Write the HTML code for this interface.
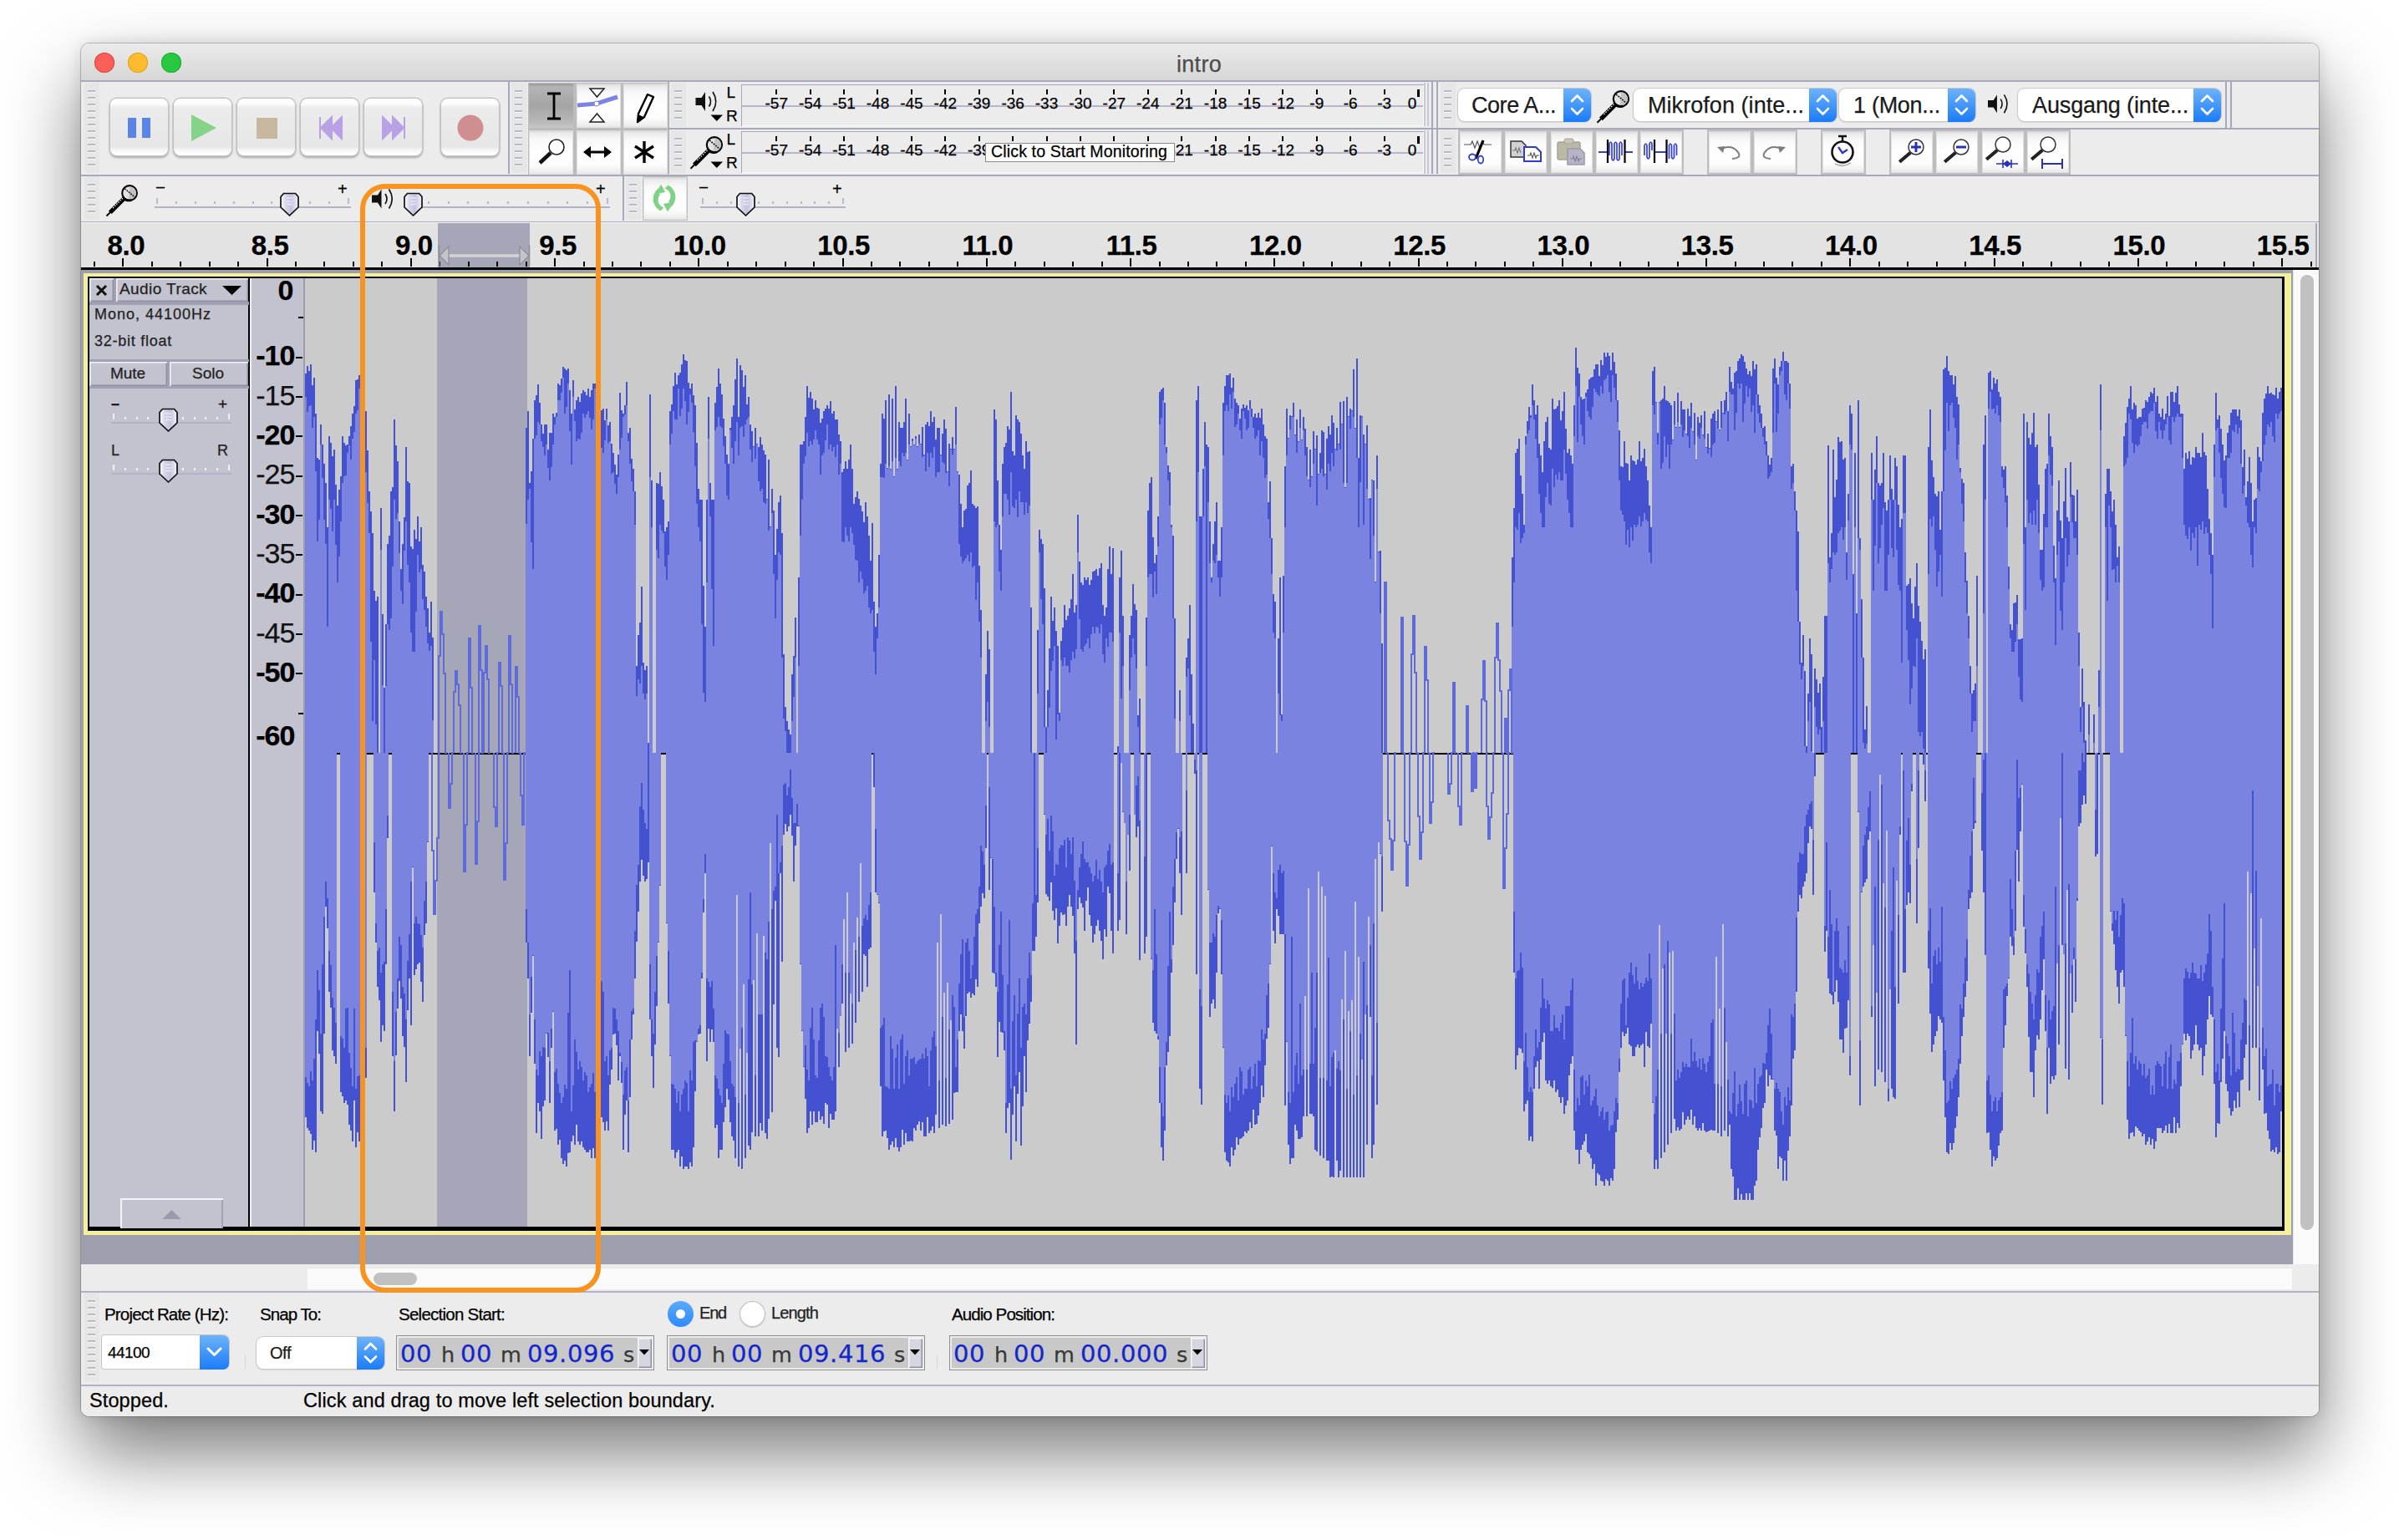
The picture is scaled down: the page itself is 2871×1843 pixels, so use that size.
<!DOCTYPE html>
<html><head><meta charset="utf-8"><title>intro</title>
<style>
html,body{margin:0;padding:0;background:#fff;}
body{width:2871px;height:1843px;overflow:hidden;position:relative;font-family:"Liberation Sans",sans-serif;}
#shadow{position:absolute;left:97px;top:52px;width:2678px;height:1643px;border-radius:10px;box-shadow:0 0 0 1px rgba(0,0,0,.2),0 44px 90px 0 rgba(0,0,0,.52),0 0 18px rgba(0,0,0,.12);}
#win{position:absolute;left:97px;top:52px;width:2678px;height:1643px;border-radius:10px;overflow:hidden;background:#ececec;}
#win div{position:absolute;}
.t{position:absolute;white-space:pre;-webkit-text-stroke:0.25px currentColor;}
#ov{position:absolute;left:0;top:0;}
#hl{position:absolute;left:334px;top:168px;width:276px;height:1315px;border:6px solid #f7931e;border-radius:30px;}
</style></head><body>
<div id="shadow"></div>
<div id="win">
<div style="left:0px;top:0px;width:2678px;height:45px;background:linear-gradient(#ebebeb,#d6d6d6);border-bottom:1px solid #b4b4b4;"></div>
<div style="left:16px;top:11px;width:24px;height:24px;border-radius:50%;background:#fc5f57;box-shadow:inset 0 0 0 1px #e0443e;"></div>
<div style="left:56px;top:11px;width:24px;height:24px;border-radius:50%;background:#fdbc2e;box-shadow:inset 0 0 0 1px #dea123;"></div>
<div style="left:96px;top:11px;width:24px;height:24px;border-radius:50%;background:#28c840;box-shadow:inset 0 0 0 1px #1dad2b;"></div>
<span class="t" style="left:1311.00px;top:11.64px;font:400 27px/1 'Liberation Sans',sans-serif;color:#4c4c4c;letter-spacing:0.295px;">intro</span>
<div style="left:0px;top:45px;width:2678px;height:170px;background:#ececec;"></div>
<div style="left:0px;top:44px;width:2678px;height:2px;background:#a9a9b9;"></div>
<div style="left:0px;top:157px;width:2678px;height:2px;background:#a8a8bc;"></div>
<div style="left:0px;top:213px;width:2678px;height:2px;background:#a8a8bc;"></div>
<div style="left:703px;top:101px;width:1975px;height:2px;background:#a8a8bc;"></div>
<div style="left:4px;top:47px;width:18px;height:108px;background:#e6e6e6;"></div>
<div style="left:8px;top:56px;width:9px;height:2px;background:#b9b9c9;"></div>
<div style="left:8px;top:58px;width:9px;height:1px;background:#fafafa;"></div>
<div style="left:8px;top:64px;width:9px;height:2px;background:#b9b9c9;"></div>
<div style="left:8px;top:66px;width:9px;height:1px;background:#fafafa;"></div>
<div style="left:8px;top:72px;width:9px;height:2px;background:#b9b9c9;"></div>
<div style="left:8px;top:74px;width:9px;height:1px;background:#fafafa;"></div>
<div style="left:8px;top:80px;width:9px;height:2px;background:#b9b9c9;"></div>
<div style="left:8px;top:82px;width:9px;height:1px;background:#fafafa;"></div>
<div style="left:8px;top:88px;width:9px;height:2px;background:#b9b9c9;"></div>
<div style="left:8px;top:90px;width:9px;height:1px;background:#fafafa;"></div>
<div style="left:8px;top:96px;width:9px;height:2px;background:#b9b9c9;"></div>
<div style="left:8px;top:98px;width:9px;height:1px;background:#fafafa;"></div>
<div style="left:8px;top:104px;width:9px;height:2px;background:#b9b9c9;"></div>
<div style="left:8px;top:106px;width:9px;height:1px;background:#fafafa;"></div>
<div style="left:8px;top:112px;width:9px;height:2px;background:#b9b9c9;"></div>
<div style="left:8px;top:114px;width:9px;height:1px;background:#fafafa;"></div>
<div style="left:8px;top:120px;width:9px;height:2px;background:#b9b9c9;"></div>
<div style="left:8px;top:122px;width:9px;height:1px;background:#fafafa;"></div>
<div style="left:8px;top:128px;width:9px;height:2px;background:#b9b9c9;"></div>
<div style="left:8px;top:130px;width:9px;height:1px;background:#fafafa;"></div>
<div style="left:8px;top:136px;width:9px;height:2px;background:#b9b9c9;"></div>
<div style="left:8px;top:138px;width:9px;height:1px;background:#fafafa;"></div>
<div style="left:8px;top:144px;width:9px;height:2px;background:#b9b9c9;"></div>
<div style="left:8px;top:146px;width:9px;height:1px;background:#fafafa;"></div>
<div style="left:4px;top:159px;width:18px;height:52px;background:#e6e6e6;"></div>
<div style="left:8px;top:168px;width:9px;height:2px;background:#b9b9c9;"></div>
<div style="left:8px;top:170px;width:9px;height:1px;background:#fafafa;"></div>
<div style="left:8px;top:176px;width:9px;height:2px;background:#b9b9c9;"></div>
<div style="left:8px;top:178px;width:9px;height:1px;background:#fafafa;"></div>
<div style="left:8px;top:184px;width:9px;height:2px;background:#b9b9c9;"></div>
<div style="left:8px;top:186px;width:9px;height:1px;background:#fafafa;"></div>
<div style="left:8px;top:192px;width:9px;height:2px;background:#b9b9c9;"></div>
<div style="left:8px;top:194px;width:9px;height:1px;background:#fafafa;"></div>
<div style="left:8px;top:200px;width:9px;height:2px;background:#b9b9c9;"></div>
<div style="left:8px;top:202px;width:9px;height:1px;background:#fafafa;"></div>
<div style="left:511px;top:46px;width:2px;height:110px;background:#a8a8bc;"></div>
<div style="left:515px;top:47px;width:18px;height:108px;background:#e6e6e6;"></div>
<div style="left:519px;top:56px;width:9px;height:2px;background:#b9b9c9;"></div>
<div style="left:519px;top:58px;width:9px;height:1px;background:#fafafa;"></div>
<div style="left:519px;top:64px;width:9px;height:2px;background:#b9b9c9;"></div>
<div style="left:519px;top:66px;width:9px;height:1px;background:#fafafa;"></div>
<div style="left:519px;top:72px;width:9px;height:2px;background:#b9b9c9;"></div>
<div style="left:519px;top:74px;width:9px;height:1px;background:#fafafa;"></div>
<div style="left:519px;top:80px;width:9px;height:2px;background:#b9b9c9;"></div>
<div style="left:519px;top:82px;width:9px;height:1px;background:#fafafa;"></div>
<div style="left:519px;top:88px;width:9px;height:2px;background:#b9b9c9;"></div>
<div style="left:519px;top:90px;width:9px;height:1px;background:#fafafa;"></div>
<div style="left:519px;top:96px;width:9px;height:2px;background:#b9b9c9;"></div>
<div style="left:519px;top:98px;width:9px;height:1px;background:#fafafa;"></div>
<div style="left:519px;top:104px;width:9px;height:2px;background:#b9b9c9;"></div>
<div style="left:519px;top:106px;width:9px;height:1px;background:#fafafa;"></div>
<div style="left:519px;top:112px;width:9px;height:2px;background:#b9b9c9;"></div>
<div style="left:519px;top:114px;width:9px;height:1px;background:#fafafa;"></div>
<div style="left:519px;top:120px;width:9px;height:2px;background:#b9b9c9;"></div>
<div style="left:519px;top:122px;width:9px;height:1px;background:#fafafa;"></div>
<div style="left:519px;top:128px;width:9px;height:2px;background:#b9b9c9;"></div>
<div style="left:519px;top:130px;width:9px;height:1px;background:#fafafa;"></div>
<div style="left:519px;top:136px;width:9px;height:2px;background:#b9b9c9;"></div>
<div style="left:519px;top:138px;width:9px;height:1px;background:#fafafa;"></div>
<div style="left:519px;top:144px;width:9px;height:2px;background:#b9b9c9;"></div>
<div style="left:519px;top:146px;width:9px;height:1px;background:#fafafa;"></div>
<div style="left:702px;top:46px;width:2px;height:110px;background:#a8a8bc;"></div>
<div style="left:706px;top:47px;width:18px;height:53px;background:#e6e6e6;"></div>
<div style="left:710px;top:56px;width:9px;height:2px;background:#b9b9c9;"></div>
<div style="left:710px;top:58px;width:9px;height:1px;background:#fafafa;"></div>
<div style="left:710px;top:64px;width:9px;height:2px;background:#b9b9c9;"></div>
<div style="left:710px;top:66px;width:9px;height:1px;background:#fafafa;"></div>
<div style="left:710px;top:72px;width:9px;height:2px;background:#b9b9c9;"></div>
<div style="left:710px;top:74px;width:9px;height:1px;background:#fafafa;"></div>
<div style="left:710px;top:80px;width:9px;height:2px;background:#b9b9c9;"></div>
<div style="left:710px;top:82px;width:9px;height:1px;background:#fafafa;"></div>
<div style="left:710px;top:88px;width:9px;height:2px;background:#b9b9c9;"></div>
<div style="left:710px;top:90px;width:9px;height:1px;background:#fafafa;"></div>
<div style="left:706px;top:104px;width:18px;height:51px;background:#e6e6e6;"></div>
<div style="left:710px;top:113px;width:9px;height:2px;background:#b9b9c9;"></div>
<div style="left:710px;top:115px;width:9px;height:1px;background:#fafafa;"></div>
<div style="left:710px;top:121px;width:9px;height:2px;background:#b9b9c9;"></div>
<div style="left:710px;top:123px;width:9px;height:1px;background:#fafafa;"></div>
<div style="left:710px;top:129px;width:9px;height:2px;background:#b9b9c9;"></div>
<div style="left:710px;top:131px;width:9px;height:1px;background:#fafafa;"></div>
<div style="left:710px;top:137px;width:9px;height:2px;background:#b9b9c9;"></div>
<div style="left:710px;top:139px;width:9px;height:1px;background:#fafafa;"></div>
<div style="left:710px;top:145px;width:9px;height:2px;background:#b9b9c9;"></div>
<div style="left:710px;top:147px;width:9px;height:1px;background:#fafafa;"></div>
<div style="left:1616px;top:46px;width:2px;height:110px;background:#a8a8bc;"></div>
<div style="left:1622px;top:46px;width:2px;height:110px;background:#a8a8bc;"></div>
<div style="left:1627px;top:47px;width:18px;height:53px;background:#e6e6e6;"></div>
<div style="left:1631px;top:56px;width:9px;height:2px;background:#b9b9c9;"></div>
<div style="left:1631px;top:58px;width:9px;height:1px;background:#fafafa;"></div>
<div style="left:1631px;top:64px;width:9px;height:2px;background:#b9b9c9;"></div>
<div style="left:1631px;top:66px;width:9px;height:1px;background:#fafafa;"></div>
<div style="left:1631px;top:72px;width:9px;height:2px;background:#b9b9c9;"></div>
<div style="left:1631px;top:74px;width:9px;height:1px;background:#fafafa;"></div>
<div style="left:1631px;top:80px;width:9px;height:2px;background:#b9b9c9;"></div>
<div style="left:1631px;top:82px;width:9px;height:1px;background:#fafafa;"></div>
<div style="left:1631px;top:88px;width:9px;height:2px;background:#b9b9c9;"></div>
<div style="left:1631px;top:90px;width:9px;height:1px;background:#fafafa;"></div>
<div style="left:1627px;top:104px;width:18px;height:51px;background:#e6e6e6;"></div>
<div style="left:1631px;top:113px;width:9px;height:2px;background:#b9b9c9;"></div>
<div style="left:1631px;top:115px;width:9px;height:1px;background:#fafafa;"></div>
<div style="left:1631px;top:121px;width:9px;height:2px;background:#b9b9c9;"></div>
<div style="left:1631px;top:123px;width:9px;height:1px;background:#fafafa;"></div>
<div style="left:1631px;top:129px;width:9px;height:2px;background:#b9b9c9;"></div>
<div style="left:1631px;top:131px;width:9px;height:1px;background:#fafafa;"></div>
<div style="left:1631px;top:137px;width:9px;height:2px;background:#b9b9c9;"></div>
<div style="left:1631px;top:139px;width:9px;height:1px;background:#fafafa;"></div>
<div style="left:1631px;top:145px;width:9px;height:2px;background:#b9b9c9;"></div>
<div style="left:1631px;top:147px;width:9px;height:1px;background:#fafafa;"></div>
<div style="left:2566px;top:46px;width:2px;height:55px;background:#a8a8bc;"></div>
<div style="left:2572px;top:46px;width:2px;height:55px;background:#a8a8bc;"></div>
<div style="left:648px;top:158px;width:2px;height:54px;background:#a8a8bc;"></div>
<div style="left:652px;top:159px;width:18px;height:52px;background:#e6e6e6;"></div>
<div style="left:656px;top:168px;width:9px;height:2px;background:#b9b9c9;"></div>
<div style="left:656px;top:170px;width:9px;height:1px;background:#fafafa;"></div>
<div style="left:656px;top:176px;width:9px;height:2px;background:#b9b9c9;"></div>
<div style="left:656px;top:178px;width:9px;height:1px;background:#fafafa;"></div>
<div style="left:656px;top:184px;width:9px;height:2px;background:#b9b9c9;"></div>
<div style="left:656px;top:186px;width:9px;height:1px;background:#fafafa;"></div>
<div style="left:656px;top:192px;width:9px;height:2px;background:#b9b9c9;"></div>
<div style="left:656px;top:194px;width:9px;height:1px;background:#fafafa;"></div>
<div style="left:656px;top:200px;width:9px;height:2px;background:#b9b9c9;"></div>
<div style="left:656px;top:202px;width:9px;height:1px;background:#fafafa;"></div>
<div style="left:1607px;top:47px;width:2px;height:52px;background:#c9c9d6;"></div>
<div style="left:1611px;top:47px;width:2px;height:52px;background:#c9c9d6;"></div>
<div style="left:1607px;top:104px;width:2px;height:52px;background:#c9c9d6;"></div>
<div style="left:1611px;top:104px;width:2px;height:52px;background:#c9c9d6;"></div>
<div style="left:35px;top:66px;width:69px;height:68px;border-radius:8px;background:linear-gradient(#ffffff 0%,#fbfbfb 10%,#ececec 16%,#e9e9e9 55%,#e6e6e6 84%,#f8f8f8 92%,#ffffff 100%);box-shadow:0 0 0 1.5px #c2c2c2, 0 2px 2.5px 1px rgba(0,0,0,.30);"></div>
<div style="left:111px;top:66px;width:69px;height:68px;border-radius:8px;background:linear-gradient(#ffffff 0%,#fbfbfb 10%,#ececec 16%,#e9e9e9 55%,#e6e6e6 84%,#f8f8f8 92%,#ffffff 100%);box-shadow:0 0 0 1.5px #c2c2c2, 0 2px 2.5px 1px rgba(0,0,0,.30);"></div>
<div style="left:187px;top:66px;width:69px;height:68px;border-radius:8px;background:linear-gradient(#ffffff 0%,#fbfbfb 10%,#ececec 16%,#e9e9e9 55%,#e6e6e6 84%,#f8f8f8 92%,#ffffff 100%);box-shadow:0 0 0 1.5px #c2c2c2, 0 2px 2.5px 1px rgba(0,0,0,.30);"></div>
<div style="left:263px;top:66px;width:69px;height:68px;border-radius:8px;background:linear-gradient(#ffffff 0%,#fbfbfb 10%,#ececec 16%,#e9e9e9 55%,#e6e6e6 84%,#f8f8f8 92%,#ffffff 100%);box-shadow:0 0 0 1.5px #c2c2c2, 0 2px 2.5px 1px rgba(0,0,0,.30);"></div>
<div style="left:339px;top:66px;width:69px;height:68px;border-radius:8px;background:linear-gradient(#ffffff 0%,#fbfbfb 10%,#ececec 16%,#e9e9e9 55%,#e6e6e6 84%,#f8f8f8 92%,#ffffff 100%);box-shadow:0 0 0 1.5px #c2c2c2, 0 2px 2.5px 1px rgba(0,0,0,.30);"></div>
<div style="left:431px;top:66px;width:69px;height:68px;border-radius:8px;background:linear-gradient(#ffffff 0%,#fbfbfb 10%,#ececec 16%,#e9e9e9 55%,#e6e6e6 84%,#f8f8f8 92%,#ffffff 100%);box-shadow:0 0 0 1.5px #c2c2c2, 0 2px 2.5px 1px rgba(0,0,0,.30);"></div>
<div style="left:535px;top:46.5px;width:167.5px;height:110.5px;background:#bcbcbc;"></div>
<div style="left:536px;top:47.5px;width:53px;height:53px;background:linear-gradient(#9a9a9a 0%,#b4b4b4 8%,#a4a4a4 50%,#b9b9b9 88%,#c8c8c8 100%);"></div>
<div style="left:536px;top:103.5px;width:53px;height:53px;background:linear-gradient(#d4d4d4 0%,#ececec 7%,#f9f9f9 22%,#ffffff 50%,#fbfbfb 80%,#ededed 95%,#dedede 100%);box-shadow:inset 1px 0 0 #e0e0e0,inset -1px 0 0 #e0e0e0;"></div>
<div style="left:592.5px;top:47.5px;width:53px;height:53px;background:linear-gradient(#d4d4d4 0%,#ececec 7%,#f9f9f9 22%,#ffffff 50%,#fbfbfb 80%,#ededed 95%,#dedede 100%);box-shadow:inset 1px 0 0 #e0e0e0,inset -1px 0 0 #e0e0e0;"></div>
<div style="left:592.5px;top:103.5px;width:53px;height:53px;background:linear-gradient(#d4d4d4 0%,#ececec 7%,#f9f9f9 22%,#ffffff 50%,#fbfbfb 80%,#ededed 95%,#dedede 100%);box-shadow:inset 1px 0 0 #e0e0e0,inset -1px 0 0 #e0e0e0;"></div>
<div style="left:648.5px;top:47.5px;width:53px;height:53px;background:linear-gradient(#d4d4d4 0%,#ececec 7%,#f9f9f9 22%,#ffffff 50%,#fbfbfb 80%,#ededed 95%,#dedede 100%);box-shadow:inset 1px 0 0 #e0e0e0,inset -1px 0 0 #e0e0e0;"></div>
<div style="left:648.5px;top:103.5px;width:53px;height:53px;background:linear-gradient(#d4d4d4 0%,#ececec 7%,#f9f9f9 22%,#ffffff 50%,#fbfbfb 80%,#ededed 95%,#dedede 100%);box-shadow:inset 1px 0 0 #e0e0e0,inset -1px 0 0 #e0e0e0;"></div>
<div style="left:790px;top:49px;width:817px;height:50px;background:#ececec;box-shadow:inset 1px 1px 0 #a8a8bc, inset -1px -1px 0 #fbfbfb;"></div>
<div style="left:791px;top:74px;width:815px;height:2px;background:#b6b6c8;"></div>
<div style="left:831.25px;top:55px;width:2px;height:6px;background:#000;"></div>
<span class="t" style="left:818.52px;top:62.42px;font:400 19px/1 'Liberation Sans',sans-serif;color:#000;">-57</span>
<div style="left:871.66px;top:55px;width:2px;height:6px;background:#000;"></div>
<span class="t" style="left:858.93px;top:62.42px;font:400 19px/1 'Liberation Sans',sans-serif;color:#000;">-54</span>
<div style="left:912.07px;top:55px;width:2px;height:6px;background:#000;"></div>
<span class="t" style="left:899.34px;top:62.42px;font:400 19px/1 'Liberation Sans',sans-serif;color:#000;">-51</span>
<div style="left:952.48px;top:55px;width:2px;height:6px;background:#000;"></div>
<span class="t" style="left:939.75px;top:62.42px;font:400 19px/1 'Liberation Sans',sans-serif;color:#000;">-48</span>
<div style="left:992.89px;top:55px;width:2px;height:6px;background:#000;"></div>
<span class="t" style="left:980.16px;top:62.42px;font:400 19px/1 'Liberation Sans',sans-serif;color:#000;">-45</span>
<div style="left:1033.3px;top:55px;width:2px;height:6px;background:#000;"></div>
<span class="t" style="left:1020.57px;top:62.42px;font:400 19px/1 'Liberation Sans',sans-serif;color:#000;">-42</span>
<div style="left:1073.71px;top:55px;width:2px;height:6px;background:#000;"></div>
<span class="t" style="left:1060.98px;top:62.42px;font:400 19px/1 'Liberation Sans',sans-serif;color:#000;">-39</span>
<div style="left:1114.12px;top:55px;width:2px;height:6px;background:#000;"></div>
<span class="t" style="left:1101.39px;top:62.42px;font:400 19px/1 'Liberation Sans',sans-serif;color:#000;">-36</span>
<div style="left:1154.53px;top:55px;width:2px;height:6px;background:#000;"></div>
<span class="t" style="left:1141.80px;top:62.42px;font:400 19px/1 'Liberation Sans',sans-serif;color:#000;">-33</span>
<div style="left:1194.94px;top:55px;width:2px;height:6px;background:#000;"></div>
<span class="t" style="left:1182.21px;top:62.42px;font:400 19px/1 'Liberation Sans',sans-serif;color:#000;">-30</span>
<div style="left:1235.35px;top:55px;width:2px;height:6px;background:#000;"></div>
<span class="t" style="left:1222.62px;top:62.42px;font:400 19px/1 'Liberation Sans',sans-serif;color:#000;">-27</span>
<div style="left:1275.76px;top:55px;width:2px;height:6px;background:#000;"></div>
<span class="t" style="left:1263.03px;top:62.42px;font:400 19px/1 'Liberation Sans',sans-serif;color:#000;">-24</span>
<div style="left:1316.17px;top:55px;width:2px;height:6px;background:#000;"></div>
<span class="t" style="left:1303.44px;top:62.42px;font:400 19px/1 'Liberation Sans',sans-serif;color:#000;">-21</span>
<div style="left:1356.58px;top:55px;width:2px;height:6px;background:#000;"></div>
<span class="t" style="left:1343.85px;top:62.42px;font:400 19px/1 'Liberation Sans',sans-serif;color:#000;">-18</span>
<div style="left:1396.99px;top:55px;width:2px;height:6px;background:#000;"></div>
<span class="t" style="left:1384.26px;top:62.42px;font:400 19px/1 'Liberation Sans',sans-serif;color:#000;">-15</span>
<div style="left:1437.4px;top:55px;width:2px;height:6px;background:#000;"></div>
<span class="t" style="left:1424.67px;top:62.42px;font:400 19px/1 'Liberation Sans',sans-serif;color:#000;">-12</span>
<div style="left:1477.81px;top:55px;width:2px;height:6px;background:#000;"></div>
<span class="t" style="left:1470.36px;top:62.42px;font:400 19px/1 'Liberation Sans',sans-serif;color:#000;">-9</span>
<div style="left:1518.22px;top:55px;width:2px;height:6px;background:#000;"></div>
<span class="t" style="left:1510.77px;top:62.42px;font:400 19px/1 'Liberation Sans',sans-serif;color:#000;">-6</span>
<div style="left:1558.63px;top:55px;width:2px;height:6px;background:#000;"></div>
<span class="t" style="left:1551.18px;top:62.42px;font:400 19px/1 'Liberation Sans',sans-serif;color:#000;">-3</span>
<div style="left:1598.54px;top:55px;width:3px;height:9px;background:#000;"></div>
<span class="t" style="left:1587.76px;top:62.42px;font:400 19px/1 'Liberation Sans',sans-serif;color:#000;">0</span>
<span class="t" style="left:772.50px;top:48.92px;font:400 19px/1 'Liberation Sans',sans-serif;color:#000;">L</span>
<span class="t" style="left:772.00px;top:76.92px;font:400 19px/1 'Liberation Sans',sans-serif;color:#000;">R</span>
<div style="left:790px;top:105px;width:817px;height:50px;background:#ececec;box-shadow:inset 1px 1px 0 #a8a8bc, inset -1px -1px 0 #fbfbfb;"></div>
<div style="left:791px;top:130px;width:815px;height:2px;background:#b6b6c8;"></div>
<div style="left:831.25px;top:111px;width:2px;height:6px;background:#000;"></div>
<span class="t" style="left:818.52px;top:118.42px;font:400 19px/1 'Liberation Sans',sans-serif;color:#000;">-57</span>
<div style="left:871.66px;top:111px;width:2px;height:6px;background:#000;"></div>
<span class="t" style="left:858.93px;top:118.42px;font:400 19px/1 'Liberation Sans',sans-serif;color:#000;">-54</span>
<div style="left:912.07px;top:111px;width:2px;height:6px;background:#000;"></div>
<span class="t" style="left:899.34px;top:118.42px;font:400 19px/1 'Liberation Sans',sans-serif;color:#000;">-51</span>
<div style="left:952.48px;top:111px;width:2px;height:6px;background:#000;"></div>
<span class="t" style="left:939.75px;top:118.42px;font:400 19px/1 'Liberation Sans',sans-serif;color:#000;">-48</span>
<div style="left:992.89px;top:111px;width:2px;height:6px;background:#000;"></div>
<span class="t" style="left:980.16px;top:118.42px;font:400 19px/1 'Liberation Sans',sans-serif;color:#000;">-45</span>
<div style="left:1033.3px;top:111px;width:2px;height:6px;background:#000;"></div>
<span class="t" style="left:1020.57px;top:118.42px;font:400 19px/1 'Liberation Sans',sans-serif;color:#000;">-42</span>
<div style="left:1073.71px;top:111px;width:2px;height:6px;background:#000;"></div>
<span class="t" style="left:1060.98px;top:118.42px;font:400 19px/1 'Liberation Sans',sans-serif;color:#000;">-39</span>
<div style="left:1114.12px;top:111px;width:2px;height:6px;background:#000;"></div>
<span class="t" style="left:1101.39px;top:118.42px;font:400 19px/1 'Liberation Sans',sans-serif;color:#000;">-36</span>
<div style="left:1154.53px;top:111px;width:2px;height:6px;background:#000;"></div>
<span class="t" style="left:1141.80px;top:118.42px;font:400 19px/1 'Liberation Sans',sans-serif;color:#000;">-33</span>
<div style="left:1194.94px;top:111px;width:2px;height:6px;background:#000;"></div>
<span class="t" style="left:1182.21px;top:118.42px;font:400 19px/1 'Liberation Sans',sans-serif;color:#000;">-30</span>
<div style="left:1235.35px;top:111px;width:2px;height:6px;background:#000;"></div>
<span class="t" style="left:1222.62px;top:118.42px;font:400 19px/1 'Liberation Sans',sans-serif;color:#000;">-27</span>
<div style="left:1275.76px;top:111px;width:2px;height:6px;background:#000;"></div>
<span class="t" style="left:1263.03px;top:118.42px;font:400 19px/1 'Liberation Sans',sans-serif;color:#000;">-24</span>
<div style="left:1316.17px;top:111px;width:2px;height:6px;background:#000;"></div>
<span class="t" style="left:1303.44px;top:118.42px;font:400 19px/1 'Liberation Sans',sans-serif;color:#000;">-21</span>
<div style="left:1356.58px;top:111px;width:2px;height:6px;background:#000;"></div>
<span class="t" style="left:1343.85px;top:118.42px;font:400 19px/1 'Liberation Sans',sans-serif;color:#000;">-18</span>
<div style="left:1396.99px;top:111px;width:2px;height:6px;background:#000;"></div>
<span class="t" style="left:1384.26px;top:118.42px;font:400 19px/1 'Liberation Sans',sans-serif;color:#000;">-15</span>
<div style="left:1437.4px;top:111px;width:2px;height:6px;background:#000;"></div>
<span class="t" style="left:1424.67px;top:118.42px;font:400 19px/1 'Liberation Sans',sans-serif;color:#000;">-12</span>
<div style="left:1477.81px;top:111px;width:2px;height:6px;background:#000;"></div>
<span class="t" style="left:1470.36px;top:118.42px;font:400 19px/1 'Liberation Sans',sans-serif;color:#000;">-9</span>
<div style="left:1518.22px;top:111px;width:2px;height:6px;background:#000;"></div>
<span class="t" style="left:1510.77px;top:118.42px;font:400 19px/1 'Liberation Sans',sans-serif;color:#000;">-6</span>
<div style="left:1558.63px;top:111px;width:2px;height:6px;background:#000;"></div>
<span class="t" style="left:1551.18px;top:118.42px;font:400 19px/1 'Liberation Sans',sans-serif;color:#000;">-3</span>
<div style="left:1598.54px;top:111px;width:3px;height:9px;background:#000;"></div>
<span class="t" style="left:1587.76px;top:118.42px;font:400 19px/1 'Liberation Sans',sans-serif;color:#000;">0</span>
<span class="t" style="left:772.50px;top:104.92px;font:400 19px/1 'Liberation Sans',sans-serif;color:#000;">L</span>
<span class="t" style="left:772.00px;top:132.92px;font:400 19px/1 'Liberation Sans',sans-serif;color:#000;">R</span>
<div style="left:1082px;top:119px;width:227px;height:23px;background:#fff;border:1.5px solid #8a8a8a;box-sizing:border-box;"></div>
<span class="t" style="left:1089.00px;top:120.49px;font:400 19.5px/1 'Liberation Sans',sans-serif;color:#000;letter-spacing:0.160px;">Click to Start Monitoring</span>
<div style="left:1648px;top:54px;width:159px;height:39px;border-radius:8px;background:#fff;box-shadow:0 0 0 1px #c9c9c9,0 1px 2px rgba(0,0,0,.25);"></div>
<div style="left:1774px;top:53.5px;width:33px;height:40px;border-radius:0 8px 8px 0;background:linear-gradient(#6db3fa,#1b7bf8);"></div>
<span class="t" style="left:1664.00px;top:61.14px;font:400 27px/1 'Liberation Sans',sans-serif;color:#1a1a1a;letter-spacing:-0.450px;">Core A...</span>
<div style="left:1858px;top:54px;width:243px;height:39px;border-radius:8px;background:#fff;box-shadow:0 0 0 1px #c9c9c9,0 1px 2px rgba(0,0,0,.25);"></div>
<div style="left:2068px;top:53.5px;width:33px;height:40px;border-radius:0 8px 8px 0;background:linear-gradient(#6db3fa,#1b7bf8);"></div>
<span class="t" style="left:1875.00px;top:61.14px;font:400 27px/1 'Liberation Sans',sans-serif;color:#1a1a1a;letter-spacing:0.055px;">Mikrofon (inte...</span>
<div style="left:2104px;top:54px;width:163px;height:39px;border-radius:8px;background:#fff;box-shadow:0 0 0 1px #c9c9c9,0 1px 2px rgba(0,0,0,.25);"></div>
<div style="left:2234px;top:53.5px;width:33px;height:40px;border-radius:0 8px 8px 0;background:linear-gradient(#6db3fa,#1b7bf8);"></div>
<span class="t" style="left:2121.00px;top:61.14px;font:400 27px/1 'Liberation Sans',sans-serif;color:#1a1a1a;letter-spacing:-0.282px;">1 (Mon...</span>
<div style="left:2318px;top:54px;width:243px;height:39px;border-radius:8px;background:#fff;box-shadow:0 0 0 1px #c9c9c9,0 1px 2px rgba(0,0,0,.25);"></div>
<div style="left:2528px;top:53.5px;width:33px;height:40px;border-radius:0 8px 8px 0;background:linear-gradient(#6db3fa,#1b7bf8);"></div>
<span class="t" style="left:2335.00px;top:61.14px;font:400 27px/1 'Liberation Sans',sans-serif;color:#1a1a1a;letter-spacing:-0.132px;">Ausgang (inte...</span>
<div style="left:1647.5px;top:103px;width:270px;height:53.5px;background:#bdbdbd;"></div>
<div style="left:1945.5px;top:103px;width:108.5px;height:53.5px;background:#bdbdbd;"></div>
<div style="left:2081.5px;top:103px;width:54px;height:53.5px;background:#bdbdbd;"></div>
<div style="left:2164px;top:103px;width:216.5px;height:53.5px;background:#bdbdbd;"></div>
<div style="left:1649.5px;top:104.5px;width:50px;height:50.5px;background:linear-gradient(#d4d4d4 0%,#ececec 7%,#f9f9f9 22%,#ffffff 50%,#fbfbfb 80%,#ededed 95%,#dedede 100%);box-shadow:inset 1px 0 0 #e0e0e0,inset -1px 0 0 #e0e0e0;"></div>
<div style="left:1704px;top:104.5px;width:50px;height:50.5px;background:linear-gradient(#d4d4d4 0%,#ececec 7%,#f9f9f9 22%,#ffffff 50%,#fbfbfb 80%,#ededed 95%,#dedede 100%);box-shadow:inset 1px 0 0 #e0e0e0,inset -1px 0 0 #e0e0e0;"></div>
<div style="left:1758.5px;top:104.5px;width:50px;height:50.5px;background:linear-gradient(#d4d4d4 0%,#ececec 7%,#f9f9f9 22%,#ffffff 50%,#fbfbfb 80%,#ededed 95%,#dedede 100%);box-shadow:inset 1px 0 0 #e0e0e0,inset -1px 0 0 #e0e0e0;"></div>
<div style="left:1812.5px;top:104.5px;width:50px;height:50.5px;background:linear-gradient(#d4d4d4 0%,#ececec 7%,#f9f9f9 22%,#ffffff 50%,#fbfbfb 80%,#ededed 95%,#dedede 100%);box-shadow:inset 1px 0 0 #e0e0e0,inset -1px 0 0 #e0e0e0;"></div>
<div style="left:1866px;top:104.5px;width:50px;height:50.5px;background:linear-gradient(#d4d4d4 0%,#ececec 7%,#f9f9f9 22%,#ffffff 50%,#fbfbfb 80%,#ededed 95%,#dedede 100%);box-shadow:inset 1px 0 0 #e0e0e0,inset -1px 0 0 #e0e0e0;"></div>
<div style="left:1947.5px;top:104.5px;width:50px;height:50.5px;background:linear-gradient(#d4d4d4 0%,#ececec 7%,#f9f9f9 22%,#ffffff 50%,#fbfbfb 80%,#ededed 95%,#dedede 100%);box-shadow:inset 1px 0 0 #e0e0e0,inset -1px 0 0 #e0e0e0;"></div>
<div style="left:2002px;top:104.5px;width:50px;height:50.5px;background:linear-gradient(#d4d4d4 0%,#ececec 7%,#f9f9f9 22%,#ffffff 50%,#fbfbfb 80%,#ededed 95%,#dedede 100%);box-shadow:inset 1px 0 0 #e0e0e0,inset -1px 0 0 #e0e0e0;"></div>
<div style="left:2083.5px;top:104.5px;width:50px;height:50.5px;background:linear-gradient(#d4d4d4 0%,#ececec 7%,#f9f9f9 22%,#ffffff 50%,#fbfbfb 80%,#ededed 95%,#dedede 100%);box-shadow:inset 1px 0 0 #e0e0e0,inset -1px 0 0 #e0e0e0;"></div>
<div style="left:2166px;top:104.5px;width:50px;height:50.5px;background:linear-gradient(#d4d4d4 0%,#ececec 7%,#f9f9f9 22%,#ffffff 50%,#fbfbfb 80%,#ededed 95%,#dedede 100%);box-shadow:inset 1px 0 0 #e0e0e0,inset -1px 0 0 #e0e0e0;"></div>
<div style="left:2220px;top:104.5px;width:50px;height:50.5px;background:linear-gradient(#d4d4d4 0%,#ececec 7%,#f9f9f9 22%,#ffffff 50%,#fbfbfb 80%,#ededed 95%,#dedede 100%);box-shadow:inset 1px 0 0 #e0e0e0,inset -1px 0 0 #e0e0e0;"></div>
<div style="left:2274.5px;top:104.5px;width:50px;height:50.5px;background:linear-gradient(#d4d4d4 0%,#ececec 7%,#f9f9f9 22%,#ffffff 50%,#fbfbfb 80%,#ededed 95%,#dedede 100%);box-shadow:inset 1px 0 0 #e0e0e0,inset -1px 0 0 #e0e0e0;"></div>
<div style="left:2328.5px;top:104.5px;width:50px;height:50.5px;background:linear-gradient(#d4d4d4 0%,#ececec 7%,#f9f9f9 22%,#ffffff 50%,#fbfbfb 80%,#ededed 95%,#dedede 100%);box-shadow:inset 1px 0 0 #e0e0e0,inset -1px 0 0 #e0e0e0;"></div>
<div style="left:88px;top:195px;width:235px;height:2px;background:#b3b3c6;"></div>
<div style="left:90px;top:185px;width:2px;height:7px;background:#b9b9cb;"></div>
<div style="left:112.9px;top:188.5px;width:2px;height:3.5px;background:#b9b9cb;"></div>
<div style="left:135.8px;top:188.5px;width:2px;height:3.5px;background:#b9b9cb;"></div>
<div style="left:158.7px;top:188.5px;width:2px;height:3.5px;background:#b9b9cb;"></div>
<div style="left:181.6px;top:188.5px;width:2px;height:3.5px;background:#b9b9cb;"></div>
<div style="left:204.5px;top:188.5px;width:2px;height:3.5px;background:#b9b9cb;"></div>
<div style="left:227.4px;top:188.5px;width:2px;height:3.5px;background:#b9b9cb;"></div>
<div style="left:250.3px;top:188.5px;width:2px;height:3.5px;background:#b9b9cb;"></div>
<div style="left:273.2px;top:188.5px;width:2px;height:3.5px;background:#b9b9cb;"></div>
<div style="left:296.1px;top:188.5px;width:2px;height:3.5px;background:#b9b9cb;"></div>
<div style="left:319px;top:185px;width:2px;height:7px;background:#b9b9cb;"></div>
<span class="t" style="left:90.00px;top:162.26px;font:400 18px/1 'Liberation Sans',sans-serif;color:#000;">–</span>
<span class="t" style="left:307.00px;top:164.07px;font:400 20px/1 'Liberation Sans',sans-serif;color:#000;">+</span>
<div style="left:389px;top:195px;width:244px;height:2px;background:#b3b3c6;"></div>
<div style="left:391px;top:185px;width:2px;height:7px;background:#b9b9cb;"></div>
<div style="left:414.8px;top:188.5px;width:2px;height:3.5px;background:#b9b9cb;"></div>
<div style="left:438.6px;top:188.5px;width:2px;height:3.5px;background:#b9b9cb;"></div>
<div style="left:462.4px;top:188.5px;width:2px;height:3.5px;background:#b9b9cb;"></div>
<div style="left:486.2px;top:188.5px;width:2px;height:3.5px;background:#b9b9cb;"></div>
<div style="left:510px;top:188.5px;width:2px;height:3.5px;background:#b9b9cb;"></div>
<div style="left:533.8px;top:188.5px;width:2px;height:3.5px;background:#b9b9cb;"></div>
<div style="left:557.6px;top:188.5px;width:2px;height:3.5px;background:#b9b9cb;"></div>
<div style="left:581.4px;top:188.5px;width:2px;height:3.5px;background:#b9b9cb;"></div>
<div style="left:605.2px;top:188.5px;width:2px;height:3.5px;background:#b9b9cb;"></div>
<div style="left:629px;top:185px;width:2px;height:7px;background:#b9b9cb;"></div>
<span class="t" style="left:392.00px;top:162.26px;font:400 18px/1 'Liberation Sans',sans-serif;color:#000;">–</span>
<span class="t" style="left:616.00px;top:164.07px;font:400 20px/1 'Liberation Sans',sans-serif;color:#000;">+</span>
<div style="left:671.5px;top:158.5px;width:54.5px;height:53.5px;background:#bdbdbd;"></div>
<div style="left:673px;top:160px;width:51.5px;height:51px;background:linear-gradient(#d4d4d4 0%,#ececec 7%,#f9f9f9 22%,#ffffff 50%,#fbfbfb 80%,#ededed 95%,#dedede 100%);box-shadow:inset 1px 0 0 #e0e0e0,inset -1px 0 0 #e0e0e0;"></div>
<div style="left:741px;top:195px;width:174px;height:2px;background:#b3b3c6;"></div>
<div style="left:743px;top:185px;width:2px;height:7px;background:#b9b9cb;"></div>
<div style="left:759.8px;top:188.5px;width:2px;height:3.5px;background:#b9b9cb;"></div>
<div style="left:776.6px;top:188.5px;width:2px;height:3.5px;background:#b9b9cb;"></div>
<div style="left:793.4px;top:188.5px;width:2px;height:3.5px;background:#b9b9cb;"></div>
<div style="left:810.2px;top:188.5px;width:2px;height:3.5px;background:#b9b9cb;"></div>
<div style="left:827px;top:188.5px;width:2px;height:3.5px;background:#b9b9cb;"></div>
<div style="left:843.8px;top:188.5px;width:2px;height:3.5px;background:#b9b9cb;"></div>
<div style="left:860.6px;top:188.5px;width:2px;height:3.5px;background:#b9b9cb;"></div>
<div style="left:877.4px;top:188.5px;width:2px;height:3.5px;background:#b9b9cb;"></div>
<div style="left:894.2px;top:188.5px;width:2px;height:3.5px;background:#b9b9cb;"></div>
<div style="left:911px;top:185px;width:2px;height:7px;background:#b9b9cb;"></div>
<span class="t" style="left:740.00px;top:162.26px;font:400 18px/1 'Liberation Sans',sans-serif;color:#000;">–</span>
<span class="t" style="left:899.00px;top:164.07px;font:400 20px/1 'Liberation Sans',sans-serif;color:#000;">+</span>
<div style="left:0px;top:214px;width:2676px;height:54px;background:#e3e3e3;"></div>
<div style="left:0px;top:214px;width:2678px;height:1px;background:#f6f6f6;"></div>
<div style="left:427px;top:215px;width:110px;height:53px;background:#a5a6b8;"></div>
<div style="left:0px;top:268px;width:2678px;height:3px;background:#000;"></div>
<div style="left:2674px;top:215px;width:2px;height:53px;background:#a8a8bc;"></div>
<div style="left:2676px;top:214px;width:2px;height:54px;background:#ececec;"></div>
<div style="left:14.85px;top:261px;width:2px;height:5.5px;background:#000;"></div>
<div style="left:49.3px;top:257px;width:2px;height:9.5px;background:#000;"></div>
<span class="t" style="left:31.44px;top:224.57px;font:700 33px/1 'Liberation Sans',sans-serif;color:#000;letter-spacing:-0.382px;">8.0</span>
<div style="left:83.75px;top:261px;width:2px;height:5.5px;background:#000;"></div>
<div style="left:118.2px;top:261px;width:2px;height:5.5px;background:#000;"></div>
<div style="left:152.65px;top:261px;width:2px;height:5.5px;background:#000;"></div>
<div style="left:187.1px;top:261px;width:2px;height:5.5px;background:#000;"></div>
<div style="left:221.55px;top:257px;width:2px;height:9.5px;background:#000;"></div>
<span class="t" style="left:203.69px;top:224.57px;font:700 33px/1 'Liberation Sans',sans-serif;color:#000;letter-spacing:-0.382px;">8.5</span>
<div style="left:256px;top:261px;width:2px;height:5.5px;background:#000;"></div>
<div style="left:290.45px;top:261px;width:2px;height:5.5px;background:#000;"></div>
<div style="left:324.9px;top:261px;width:2px;height:5.5px;background:#000;"></div>
<div style="left:359.35px;top:261px;width:2px;height:5.5px;background:#000;"></div>
<div style="left:393.8px;top:257px;width:2px;height:9.5px;background:#000;"></div>
<span class="t" style="left:375.94px;top:224.57px;font:700 33px/1 'Liberation Sans',sans-serif;color:#000;letter-spacing:-0.382px;">9.0</span>
<div style="left:428.25px;top:261px;width:2px;height:5.5px;background:#000;"></div>
<div style="left:462.7px;top:261px;width:2px;height:5.5px;background:#000;"></div>
<div style="left:497.15px;top:261px;width:2px;height:5.5px;background:#000;"></div>
<div style="left:531.6px;top:261px;width:2px;height:5.5px;background:#000;"></div>
<div style="left:566.05px;top:257px;width:2px;height:9.5px;background:#000;"></div>
<span class="t" style="left:548.19px;top:224.57px;font:700 33px/1 'Liberation Sans',sans-serif;color:#000;letter-spacing:-0.382px;">9.5</span>
<div style="left:600.5px;top:261px;width:2px;height:5.5px;background:#000;"></div>
<div style="left:634.95px;top:261px;width:2px;height:5.5px;background:#000;"></div>
<div style="left:669.4px;top:261px;width:2px;height:5.5px;background:#000;"></div>
<div style="left:703.85px;top:261px;width:2px;height:5.5px;background:#000;"></div>
<div style="left:738.3px;top:257px;width:2px;height:9.5px;background:#000;"></div>
<span class="t" style="left:708.99px;top:224.57px;font:700 33px/1 'Liberation Sans',sans-serif;color:#000;letter-spacing:-0.401px;">10.0</span>
<div style="left:772.75px;top:261px;width:2px;height:5.5px;background:#000;"></div>
<div style="left:807.2px;top:261px;width:2px;height:5.5px;background:#000;"></div>
<div style="left:841.65px;top:261px;width:2px;height:5.5px;background:#000;"></div>
<div style="left:876.1px;top:261px;width:2px;height:5.5px;background:#000;"></div>
<div style="left:910.55px;top:257px;width:2px;height:9.5px;background:#000;"></div>
<span class="t" style="left:881.24px;top:224.57px;font:700 33px/1 'Liberation Sans',sans-serif;color:#000;letter-spacing:-0.401px;">10.5</span>
<div style="left:945px;top:261px;width:2px;height:5.5px;background:#000;"></div>
<div style="left:979.45px;top:261px;width:2px;height:5.5px;background:#000;"></div>
<div style="left:1013.9px;top:261px;width:2px;height:5.5px;background:#000;"></div>
<div style="left:1048.35px;top:261px;width:2px;height:5.5px;background:#000;"></div>
<div style="left:1082.8px;top:257px;width:2px;height:9.5px;background:#000;"></div>
<span class="t" style="left:1054.38px;top:224.57px;font:700 33px/1 'Liberation Sans',sans-serif;color:#000;letter-spacing:-0.390px;">11.0</span>
<div style="left:1117.25px;top:261px;width:2px;height:5.5px;background:#000;"></div>
<div style="left:1151.7px;top:261px;width:2px;height:5.5px;background:#000;"></div>
<div style="left:1186.15px;top:261px;width:2px;height:5.5px;background:#000;"></div>
<div style="left:1220.6px;top:261px;width:2px;height:5.5px;background:#000;"></div>
<div style="left:1255.05px;top:257px;width:2px;height:9.5px;background:#000;"></div>
<span class="t" style="left:1226.63px;top:224.57px;font:700 33px/1 'Liberation Sans',sans-serif;color:#000;letter-spacing:-0.390px;">11.5</span>
<div style="left:1289.5px;top:261px;width:2px;height:5.5px;background:#000;"></div>
<div style="left:1323.95px;top:261px;width:2px;height:5.5px;background:#000;"></div>
<div style="left:1358.4px;top:261px;width:2px;height:5.5px;background:#000;"></div>
<div style="left:1392.85px;top:261px;width:2px;height:5.5px;background:#000;"></div>
<div style="left:1427.3px;top:257px;width:2px;height:9.5px;background:#000;"></div>
<span class="t" style="left:1397.99px;top:224.57px;font:700 33px/1 'Liberation Sans',sans-serif;color:#000;letter-spacing:-0.401px;">12.0</span>
<div style="left:1461.75px;top:261px;width:2px;height:5.5px;background:#000;"></div>
<div style="left:1496.2px;top:261px;width:2px;height:5.5px;background:#000;"></div>
<div style="left:1530.65px;top:261px;width:2px;height:5.5px;background:#000;"></div>
<div style="left:1565.1px;top:261px;width:2px;height:5.5px;background:#000;"></div>
<div style="left:1599.55px;top:257px;width:2px;height:9.5px;background:#000;"></div>
<span class="t" style="left:1570.24px;top:224.57px;font:700 33px/1 'Liberation Sans',sans-serif;color:#000;letter-spacing:-0.401px;">12.5</span>
<div style="left:1634px;top:261px;width:2px;height:5.5px;background:#000;"></div>
<div style="left:1668.45px;top:261px;width:2px;height:5.5px;background:#000;"></div>
<div style="left:1702.9px;top:261px;width:2px;height:5.5px;background:#000;"></div>
<div style="left:1737.35px;top:261px;width:2px;height:5.5px;background:#000;"></div>
<div style="left:1771.8px;top:257px;width:2px;height:9.5px;background:#000;"></div>
<span class="t" style="left:1742.49px;top:224.57px;font:700 33px/1 'Liberation Sans',sans-serif;color:#000;letter-spacing:-0.401px;">13.0</span>
<div style="left:1806.25px;top:261px;width:2px;height:5.5px;background:#000;"></div>
<div style="left:1840.7px;top:261px;width:2px;height:5.5px;background:#000;"></div>
<div style="left:1875.15px;top:261px;width:2px;height:5.5px;background:#000;"></div>
<div style="left:1909.6px;top:261px;width:2px;height:5.5px;background:#000;"></div>
<div style="left:1944.05px;top:257px;width:2px;height:9.5px;background:#000;"></div>
<span class="t" style="left:1914.74px;top:224.57px;font:700 33px/1 'Liberation Sans',sans-serif;color:#000;letter-spacing:-0.401px;">13.5</span>
<div style="left:1978.5px;top:261px;width:2px;height:5.5px;background:#000;"></div>
<div style="left:2012.95px;top:261px;width:2px;height:5.5px;background:#000;"></div>
<div style="left:2047.4px;top:261px;width:2px;height:5.5px;background:#000;"></div>
<div style="left:2081.85px;top:261px;width:2px;height:5.5px;background:#000;"></div>
<div style="left:2116.3px;top:257px;width:2px;height:9.5px;background:#000;"></div>
<span class="t" style="left:2086.99px;top:224.57px;font:700 33px/1 'Liberation Sans',sans-serif;color:#000;letter-spacing:-0.401px;">14.0</span>
<div style="left:2150.75px;top:261px;width:2px;height:5.5px;background:#000;"></div>
<div style="left:2185.2px;top:261px;width:2px;height:5.5px;background:#000;"></div>
<div style="left:2219.65px;top:261px;width:2px;height:5.5px;background:#000;"></div>
<div style="left:2254.1px;top:261px;width:2px;height:5.5px;background:#000;"></div>
<div style="left:2288.55px;top:257px;width:2px;height:9.5px;background:#000;"></div>
<span class="t" style="left:2259.24px;top:224.57px;font:700 33px/1 'Liberation Sans',sans-serif;color:#000;letter-spacing:-0.401px;">14.5</span>
<div style="left:2323px;top:261px;width:2px;height:5.5px;background:#000;"></div>
<div style="left:2357.45px;top:261px;width:2px;height:5.5px;background:#000;"></div>
<div style="left:2391.9px;top:261px;width:2px;height:5.5px;background:#000;"></div>
<div style="left:2426.35px;top:261px;width:2px;height:5.5px;background:#000;"></div>
<div style="left:2460.8px;top:257px;width:2px;height:9.5px;background:#000;"></div>
<span class="t" style="left:2431.49px;top:224.57px;font:700 33px/1 'Liberation Sans',sans-serif;color:#000;letter-spacing:-0.401px;">15.0</span>
<div style="left:2495.25px;top:261px;width:2px;height:5.5px;background:#000;"></div>
<div style="left:2529.7px;top:261px;width:2px;height:5.5px;background:#000;"></div>
<div style="left:2564.15px;top:261px;width:2px;height:5.5px;background:#000;"></div>
<div style="left:2598.6px;top:261px;width:2px;height:5.5px;background:#000;"></div>
<div style="left:2633.05px;top:257px;width:2px;height:9.5px;background:#000;"></div>
<span class="t" style="left:2603.74px;top:224.57px;font:700 33px/1 'Liberation Sans',sans-serif;color:#000;letter-spacing:-0.401px;">15.5</span>
<div style="left:2667.5px;top:261px;width:2px;height:5.5px;background:#000;"></div>
<div style="left:0px;top:271px;width:2678px;height:1190px;background:#9d9eae;"></div>
<div style="left:3px;top:275px;width:2642px;height:1151px;background:#f4ef9a;"></div>
<div style="left:8px;top:279px;width:2629px;height:1142px;background:#000;"></div>
<div style="left:10px;top:281px;width:191px;height:1135px;background:#c3c2cf;"></div>
<div style="left:200px;top:281px;width:2px;height:1135px;background:#000;"></div>
<div style="left:202px;top:281px;width:1.5px;height:1135px;background:#eeeef4;"></div>
<div style="left:204px;top:281px;width:62px;height:1135px;background:#c3c2cf;"></div>
<div style="left:266px;top:281px;width:2px;height:1135px;background:#9c9cb0;"></div>
<div style="left:268px;top:281px;width:2366px;height:1135px;background:#cbcbcb;"></div>
<div style="left:426px;top:281px;width:108px;height:1135px;background:#a5a6b8;"></div>
<div style="left:2647px;top:271px;width:31px;height:1190px;background:#fafafa;border-left:1px solid #e6e6e6;box-sizing:border-box;"></div>
<div style="left:2656px;top:277px;width:15.5px;height:1143px;background:#c1c1c1;border-radius:8px;"></div>
<div style="left:0px;top:1461px;width:2678px;height:32px;background:#ececec;"></div>
<div style="left:271px;top:1465px;width:2375px;height:26px;background:#fafafa;border-top:1px solid #e8e8e8;box-sizing:border-box;"></div>
<div style="left:350px;top:1471px;width:52px;height:15px;background:#c1c1c1;border-radius:8px;"></div>
<div style="left:0px;top:1493px;width:2678px;height:2px;background:#b2b2c2;"></div>
<div style="left:10px;top:281px;width:29px;height:28px;background:#c3c2cf;box-shadow:inset 1.5px 1.5px 0 #f3f3f8, inset -1.5px -1.5px 0 #8f8fa3;"></div>
<div style="left:42px;top:281px;width:158px;height:28px;background:#c3c2cf;box-shadow:inset 1.5px 1.5px 0 #f3f3f8, inset -1.5px -1.5px 0 #8f8fa3;"></div>
<span class="t" style="left:46.00px;top:283.92px;font:400 19px/1 'Liberation Sans',sans-serif;color:#222;letter-spacing:0.425px;">Audio Track</span>
<div style="left:10px;top:309px;width:191px;height:4px;background:#a0a1b5;"></div>
<span class="t" style="left:16.00px;top:314.76px;font:400 18px/1 'Liberation Sans',sans-serif;color:#222;letter-spacing:0.993px;">Mono, 44100Hz</span>
<span class="t" style="left:16.00px;top:346.76px;font:400 18px/1 'Liberation Sans',sans-serif;color:#222;letter-spacing:0.745px;">32-bit float</span>
<div style="left:10px;top:378px;width:191px;height:3px;background:#a0a1b5;"></div>
<div style="left:10px;top:381px;width:93px;height:29px;background:#c3c2cf;box-shadow:inset 1.5px 1.5px 0 #f3f3f8, inset -1.5px -1.5px 0 #8f8fa3;"></div>
<div style="left:106px;top:381px;width:94px;height:29px;background:#c3c2cf;box-shadow:inset 1.5px 1.5px 0 #f3f3f8, inset -1.5px -1.5px 0 #8f8fa3;"></div>
<div style="left:103px;top:381px;width:3px;height:29px;background:#a0a1b5;"></div>
<div style="left:39px;top:281px;width:3px;height:28px;background:#a0a1b5;"></div>
<div style="left:10px;top:410px;width:191px;height:3px;background:#a0a1b5;"></div>
<span class="t" style="left:34.88px;top:384.92px;font:400 19px/1 'Liberation Sans',sans-serif;color:#222;">Mute</span>
<span class="t" style="left:132.99px;top:384.92px;font:400 19px/1 'Liberation Sans',sans-serif;color:#222;">Solo</span>
<div style="left:36px;top:453px;width:144px;height:2px;background:#b3b3c6;"></div>
<div style="left:38px;top:443px;width:2px;height:7px;background:#eeeef4;"></div>
<div style="left:51.8px;top:446.5px;width:2px;height:3.5px;background:#eeeef4;"></div>
<div style="left:65.6px;top:446.5px;width:2px;height:3.5px;background:#eeeef4;"></div>
<div style="left:79.4px;top:446.5px;width:2px;height:3.5px;background:#eeeef4;"></div>
<div style="left:93.2px;top:446.5px;width:2px;height:3.5px;background:#eeeef4;"></div>
<div style="left:107px;top:446.5px;width:2px;height:3.5px;background:#eeeef4;"></div>
<div style="left:120.8px;top:446.5px;width:2px;height:3.5px;background:#eeeef4;"></div>
<div style="left:134.6px;top:446.5px;width:2px;height:3.5px;background:#eeeef4;"></div>
<div style="left:148.4px;top:446.5px;width:2px;height:3.5px;background:#eeeef4;"></div>
<div style="left:162.2px;top:446.5px;width:2px;height:3.5px;background:#eeeef4;"></div>
<div style="left:176px;top:443px;width:2px;height:7px;background:#eeeef4;"></div>
<span class="t" style="left:36.00px;top:421.76px;font:700 18px/1 'Liberation Sans',sans-serif;color:#111;">–</span>
<span class="t" style="left:164.00px;top:421.92px;font:400 19px/1 'Liberation Sans',sans-serif;color:#111;">+</span>
<div style="left:36px;top:514px;width:144px;height:2px;background:#b3b3c6;"></div>
<div style="left:38px;top:504px;width:2px;height:7px;background:#eeeef4;"></div>
<div style="left:51.8px;top:507.5px;width:2px;height:3.5px;background:#eeeef4;"></div>
<div style="left:65.6px;top:507.5px;width:2px;height:3.5px;background:#eeeef4;"></div>
<div style="left:79.4px;top:507.5px;width:2px;height:3.5px;background:#eeeef4;"></div>
<div style="left:93.2px;top:507.5px;width:2px;height:3.5px;background:#eeeef4;"></div>
<div style="left:107px;top:507.5px;width:2px;height:3.5px;background:#eeeef4;"></div>
<div style="left:120.8px;top:507.5px;width:2px;height:3.5px;background:#eeeef4;"></div>
<div style="left:134.6px;top:507.5px;width:2px;height:3.5px;background:#eeeef4;"></div>
<div style="left:148.4px;top:507.5px;width:2px;height:3.5px;background:#eeeef4;"></div>
<div style="left:162.2px;top:507.5px;width:2px;height:3.5px;background:#eeeef4;"></div>
<div style="left:176px;top:504px;width:2px;height:7px;background:#eeeef4;"></div>
<span class="t" style="left:36.00px;top:477.76px;font:400 18px/1 'Liberation Sans',sans-serif;color:#222;">L</span>
<span class="t" style="left:163.00px;top:477.76px;font:400 18px/1 'Liberation Sans',sans-serif;color:#222;">R</span>
<div style="left:47px;top:1382px;width:123px;height:36px;background:#c3c2cf;box-shadow:inset 2px 2px 0 #f3f3f8, inset -2px 0 0 #a2a2b4;"></div>
<span class="t" style="left:235.59px;top:277.72px;font:700 34px/1 'Liberation Sans',sans-serif;color:#000;">0</span>
<span class="t" style="left:209.25px;top:356.22px;font:700 34px/1 'Liberation Sans',sans-serif;color:#000;letter-spacing:-0.964px;">-10</span>
<div style="left:257px;top:374.7px;width:8px;height:2px;background:#000;"></div>
<span class="t" style="left:209.25px;top:403.55px;font:400 34px/1 'Liberation Sans',sans-serif;color:#111;letter-spacing:-0.964px;">-15</span>
<div style="left:257px;top:422.03px;width:8px;height:2px;background:#000;"></div>
<span class="t" style="left:209.25px;top:450.88px;font:700 34px/1 'Liberation Sans',sans-serif;color:#000;letter-spacing:-0.964px;">-20</span>
<div style="left:257px;top:469.36px;width:8px;height:2px;background:#000;"></div>
<span class="t" style="left:209.25px;top:498.21px;font:400 34px/1 'Liberation Sans',sans-serif;color:#111;letter-spacing:-0.964px;">-25</span>
<div style="left:257px;top:516.69px;width:8px;height:2px;background:#000;"></div>
<span class="t" style="left:209.25px;top:545.54px;font:700 34px/1 'Liberation Sans',sans-serif;color:#000;letter-spacing:-0.964px;">-30</span>
<div style="left:257px;top:564.02px;width:8px;height:2px;background:#000;"></div>
<span class="t" style="left:209.25px;top:592.87px;font:400 34px/1 'Liberation Sans',sans-serif;color:#111;letter-spacing:-0.964px;">-35</span>
<div style="left:257px;top:611.35px;width:8px;height:2px;background:#000;"></div>
<span class="t" style="left:209.25px;top:640.20px;font:700 34px/1 'Liberation Sans',sans-serif;color:#000;letter-spacing:-0.964px;">-40</span>
<div style="left:257px;top:658.68px;width:8px;height:2px;background:#000;"></div>
<span class="t" style="left:209.25px;top:687.53px;font:400 34px/1 'Liberation Sans',sans-serif;color:#111;letter-spacing:-0.964px;">-45</span>
<div style="left:257px;top:706.01px;width:8px;height:2px;background:#000;"></div>
<span class="t" style="left:209.25px;top:734.86px;font:700 34px/1 'Liberation Sans',sans-serif;color:#000;letter-spacing:-0.964px;">-50</span>
<div style="left:257px;top:753.34px;width:8px;height:2px;background:#000;"></div>
<span class="t" style="left:209.25px;top:811.22px;font:700 34px/1 'Liberation Sans',sans-serif;color:#000;letter-spacing:-0.964px;">-60</span>
<div style="left:260px;top:327.37px;width:6px;height:2px;background:#000;"></div>
<div style="left:260px;top:800.67px;width:6px;height:2px;background:#000;"></div>
<div style="left:0px;top:1495px;width:2678px;height:110px;background:#ececec;"></div>
<div style="left:0px;top:1605px;width:2678px;height:2px;background:#b2b2c2;"></div>
<div style="left:0px;top:1607px;width:2678px;height:36px;background:#ececec;"></div>
<div style="left:4px;top:1495px;width:18px;height:106px;background:#e6e6e6;"></div>
<div style="left:8px;top:1504px;width:9px;height:2px;background:#b9b9c9;"></div>
<div style="left:8px;top:1506px;width:9px;height:1px;background:#fafafa;"></div>
<div style="left:8px;top:1512px;width:9px;height:2px;background:#b9b9c9;"></div>
<div style="left:8px;top:1514px;width:9px;height:1px;background:#fafafa;"></div>
<div style="left:8px;top:1520px;width:9px;height:2px;background:#b9b9c9;"></div>
<div style="left:8px;top:1522px;width:9px;height:1px;background:#fafafa;"></div>
<div style="left:8px;top:1528px;width:9px;height:2px;background:#b9b9c9;"></div>
<div style="left:8px;top:1530px;width:9px;height:1px;background:#fafafa;"></div>
<div style="left:8px;top:1536px;width:9px;height:2px;background:#b9b9c9;"></div>
<div style="left:8px;top:1538px;width:9px;height:1px;background:#fafafa;"></div>
<div style="left:8px;top:1544px;width:9px;height:2px;background:#b9b9c9;"></div>
<div style="left:8px;top:1546px;width:9px;height:1px;background:#fafafa;"></div>
<div style="left:8px;top:1552px;width:9px;height:2px;background:#b9b9c9;"></div>
<div style="left:8px;top:1554px;width:9px;height:1px;background:#fafafa;"></div>
<div style="left:8px;top:1560px;width:9px;height:2px;background:#b9b9c9;"></div>
<div style="left:8px;top:1562px;width:9px;height:1px;background:#fafafa;"></div>
<div style="left:8px;top:1568px;width:9px;height:2px;background:#b9b9c9;"></div>
<div style="left:8px;top:1570px;width:9px;height:1px;background:#fafafa;"></div>
<div style="left:8px;top:1576px;width:9px;height:2px;background:#b9b9c9;"></div>
<div style="left:8px;top:1578px;width:9px;height:1px;background:#fafafa;"></div>
<div style="left:8px;top:1584px;width:9px;height:2px;background:#b9b9c9;"></div>
<div style="left:8px;top:1586px;width:9px;height:1px;background:#fafafa;"></div>
<div style="left:8px;top:1592px;width:9px;height:2px;background:#b9b9c9;"></div>
<div style="left:8px;top:1594px;width:9px;height:1px;background:#fafafa;"></div>
<span class="t" style="left:28.00px;top:1510.65px;font:400 20.5px/1 'Liberation Sans',sans-serif;color:#000;letter-spacing:-0.827px;">Project Rate (Hz):</span>
<span class="t" style="left:214.00px;top:1510.65px;font:400 20.5px/1 'Liberation Sans',sans-serif;color:#000;letter-spacing:-0.943px;">Snap To:</span>
<span class="t" style="left:380.00px;top:1510.65px;font:400 20.5px/1 'Liberation Sans',sans-serif;color:#000;letter-spacing:-0.751px;">Selection Start:</span>
<span class="t" style="left:1042.00px;top:1510.65px;font:400 20.5px/1 'Liberation Sans',sans-serif;color:#000;letter-spacing:-0.917px;">Audio Position:</span>
<div style="left:25px;top:1546px;width:152px;height:40px;background:#fff;box-shadow:0 0 0 1px #c4c4c4;border-radius:3px 7px 7px 3px;"></div>
<div style="left:142px;top:1545.5px;width:35px;height:41px;border-radius:0 7px 7px 0;background:linear-gradient(#6db3fa,#1b7bf8);"></div>
<span class="t" style="left:32.00px;top:1556.92px;font:400 19px/1 'Liberation Sans',sans-serif;color:#000;letter-spacing:-0.566px;">44100</span>
<div style="left:210px;top:1548px;width:153px;height:38px;border-radius:8px;background:#fff;box-shadow:0 0 0 1px #c9c9c9,0 1px 2px rgba(0,0,0,.25);"></div>
<div style="left:330px;top:1547.5px;width:33px;height:39px;border-radius:0 8px 8px 0;background:linear-gradient(#6db3fa,#1b7bf8);"></div>
<span class="t" style="left:226.00px;top:1557.07px;font:400 20px/1 'Liberation Sans',sans-serif;color:#1a1a1a;letter-spacing:-0.436px;">Off</span>
<div style="left:196px;top:1569px;width:1px;height:18px;background:#d6d6d6;"></div>
<div style="left:1024px;top:1569px;width:1px;height:18px;background:#d6d6d6;"></div>
<div style="left:377px;top:1546px;width:309px;height:42px;background:#ececec;box-shadow:inset 0 0 0 1px #8e8e8e;"></div>
<div style="left:380px;top:1549px;width:303px;height:36px;background:#c8c8c8;"></div>
<div style="left:666px;top:1549px;width:17px;height:36px;background:#d6d6e0;box-shadow:inset 1.5px 1.5px 0 #f8f8f8, inset -1.5px -1.5px 0 #8f8fa3;"></div>
<span class="t" style="left:382.00px;top:1554.47px;font:400 29px/1 'DejaVu Sans','Liberation Sans',sans-serif;color:#1226cc;letter-spacing:0.549px;">00</span>
<span class="t" style="left:431.00px;top:1557.13px;font:400 25.5px/1 'DejaVu Sans','Liberation Sans',sans-serif;color:#383838;">h</span>
<span class="t" style="left:454.00px;top:1554.47px;font:400 29px/1 'DejaVu Sans','Liberation Sans',sans-serif;color:#1226cc;letter-spacing:0.549px;">00</span>
<span class="t" style="left:502.00px;top:1557.13px;font:400 25.5px/1 'DejaVu Sans','Liberation Sans',sans-serif;color:#383838;">m</span>
<span class="t" style="left:534.00px;top:1554.47px;font:400 29px/1 'DejaVu Sans','Liberation Sans',sans-serif;color:#1226cc;letter-spacing:0.588px;">09.096</span>
<span class="t" style="left:649.00px;top:1557.13px;font:400 25.5px/1 'DejaVu Sans','Liberation Sans',sans-serif;color:#383838;">s</span>
<div style="left:701px;top:1546px;width:309px;height:42px;background:#ececec;box-shadow:inset 0 0 0 1px #8e8e8e;"></div>
<div style="left:704px;top:1549px;width:303px;height:36px;background:#c8c8c8;"></div>
<div style="left:990px;top:1549px;width:17px;height:36px;background:#d6d6e0;box-shadow:inset 1.5px 1.5px 0 #f8f8f8, inset -1.5px -1.5px 0 #8f8fa3;"></div>
<span class="t" style="left:706.00px;top:1554.47px;font:400 29px/1 'DejaVu Sans','Liberation Sans',sans-serif;color:#1226cc;letter-spacing:0.549px;">00</span>
<span class="t" style="left:755.00px;top:1557.13px;font:400 25.5px/1 'DejaVu Sans','Liberation Sans',sans-serif;color:#383838;">h</span>
<span class="t" style="left:778.00px;top:1554.47px;font:400 29px/1 'DejaVu Sans','Liberation Sans',sans-serif;color:#1226cc;letter-spacing:0.549px;">00</span>
<span class="t" style="left:826.00px;top:1557.13px;font:400 25.5px/1 'DejaVu Sans','Liberation Sans',sans-serif;color:#383838;">m</span>
<span class="t" style="left:858.00px;top:1554.47px;font:400 29px/1 'DejaVu Sans','Liberation Sans',sans-serif;color:#1226cc;letter-spacing:0.588px;">09.416</span>
<span class="t" style="left:973.00px;top:1557.13px;font:400 25.5px/1 'DejaVu Sans','Liberation Sans',sans-serif;color:#383838;">s</span>
<div style="left:1039px;top:1546px;width:309px;height:42px;background:#ececec;box-shadow:inset 0 0 0 1px #8e8e8e;"></div>
<div style="left:1042px;top:1549px;width:303px;height:36px;background:#c8c8c8;"></div>
<div style="left:1328px;top:1549px;width:17px;height:36px;background:#d6d6e0;box-shadow:inset 1.5px 1.5px 0 #f8f8f8, inset -1.5px -1.5px 0 #8f8fa3;"></div>
<span class="t" style="left:1044.00px;top:1554.47px;font:400 29px/1 'DejaVu Sans','Liberation Sans',sans-serif;color:#1226cc;letter-spacing:0.549px;">00</span>
<span class="t" style="left:1093.00px;top:1557.13px;font:400 25.5px/1 'DejaVu Sans','Liberation Sans',sans-serif;color:#383838;">h</span>
<span class="t" style="left:1116.00px;top:1554.47px;font:400 29px/1 'DejaVu Sans','Liberation Sans',sans-serif;color:#1226cc;letter-spacing:0.549px;">00</span>
<span class="t" style="left:1164.00px;top:1557.13px;font:400 25.5px/1 'DejaVu Sans','Liberation Sans',sans-serif;color:#383838;">m</span>
<span class="t" style="left:1196.00px;top:1554.47px;font:400 29px/1 'DejaVu Sans','Liberation Sans',sans-serif;color:#1226cc;letter-spacing:0.588px;">00.000</span>
<span class="t" style="left:1311.00px;top:1557.13px;font:400 25.5px/1 'DejaVu Sans','Liberation Sans',sans-serif;color:#383838;">s</span>
<div style="left:702px;top:1505px;width:31px;height:31px;border-radius:50%;background:linear-gradient(#5aa9fb,#2f8bf9);"></div>
<div style="left:712px;top:1515px;width:11px;height:11px;border-radius:50%;background:#fff;"></div>
<div style="left:788px;top:1505px;width:31px;height:31px;border-radius:50%;background:#fff;box-shadow:inset 0 0 0 1px #b9b9b9, 0 1px 1px rgba(0,0,0,.15);"></div>
<span class="t" style="left:740.00px;top:1509.07px;font:400 20px/1 'Liberation Sans',sans-serif;color:#222;letter-spacing:-1.195px;">End</span>
<span class="t" style="left:826.00px;top:1509.07px;font:400 20px/1 'Liberation Sans',sans-serif;color:#222;letter-spacing:-0.862px;">Length</span>
<span class="t" style="left:10.00px;top:1612.61px;font:400 23.5px/1 'Liberation Sans',sans-serif;color:#000;letter-spacing:0.115px;">Stopped.</span>
<span class="t" style="left:266.00px;top:1612.61px;font:400 23.5px/1 'Liberation Sans',sans-serif;color:#000;letter-spacing:0.132px;">Click and drag to move left selection boundary.</span>
<svg id="ov" width="2678" height="1643" viewBox="97 52 2678 1643" shape-rendering="auto">
<g shape-rendering="crispEdges"><rect x="365" y="901" width="2366" height="2" fill="#000"/><path fill="#4451d0" d="M365 901V447h2V438h2V444h2V436h2V461h2V452h2V495h2V548h2V550h2V508h2V532h2V555h2V578h2V631h2V522h2V530h2V546h2V538h2V580h2V605h2V586h2V570h2V522h2V530h2V533h2V532h2V522h2V510h2V495h2V486h2V455h2V454h2V449h2V457h2V465h2V490h2V492h2V539h2V588h2V612h2V638h2V707h2V719h2V714h2V901ZM455 901V608h2V735h2V823h2V747h2V651h2V641h2V588h2V583h2V502h2V533h2V552h2V624h2V681h2V651h2V619h2V535h2V576h2V578h2V654h2V657h2V634h2V645h2V618h2V648h2V631h2V676h2V684h2V714h2V728h2V757h2V720h2V763h2V901ZM629 901V512h2V492h2V578h2V564h2V525h2V479h2V473h2V460h2V482h2V508h2V519h2V508h2V508h2V538h2V518h2V518h2V495h2V499h2V494h2V459h2V461h2V453h2V439h2V441h2V443h2V441h2V467h2V495h2V455h2V490h2V479h2V475h2V481h2V471h2V467h2V469h2V473h2V465h2V475h2V467h2V459h2V459h2V479h2V472h2V495h2V491h2V489h2V503h2V489h2V509h2V505h2V531h2V542h2V556h2V568h2V544h2V470h2V491h2V495h2V485h2V457h2V518h2V512h2V549h2V561h2V588h2V797h2V760h2V745h2V702h2V793h2V802h2V797h2V889h2V472h2V575h2V901ZM785 901V578h2V579h2V565h2V582h2V598h2V636h2V631h2V624h2V492h2V484h2V462h2V446h2V460h2V449h2V446h2V436h2V424h2V431h2V432h2V458h2V465h2V459h2V473h2V485h2V530h2V585h2V598h2V598h2V701h2V750h2V598h2V475h2V578h2V598h2V598h2V482h2V463h2V441h2V459h2V472h2V501h2V522h2V544h2V555h2V512h2V499h2V485h2V454h2V429h2V499h2V437h2V443h2V463h2V449h2V484h2V475h2V508h2V516h2V534h2V512h2V531h2V535h2V523h2V532h2V539h2V544h2V597h2V550h2V630h2V585h2V611h2V664h2V633h2V601h2V593h2V638h2V783h2V846h2V863h2V873h2V879h2V807h2V785h2V739h2V901ZM955 901V691h2V532h2V532h2V528h2V499h2V462h2V476h2V469h2V477h2V490h2V479h2V488h2V489h2V506h2V501h2V492h2V489h2V485h2V489h2V480h2V495h2V492h2V502h2V502h2V520h2V528h2V565h2V561h2V552h2V561h2V550h2V532h2V561h2V603h2V595h2V588h2V597h2V605h2V612h2V625h2V601h2V618h2V641h2V671h2V626h2V720h2V750h2V734h2V664h2V555h2V495h2V501h2V479h2V560h2V472h2V561h2V477h2V570h2V462h2V561h2V505h2V512h2V512h2V505h2V477h2V550h2V495h2V534h2V525h2V532h2V522h2V534h2V520h2V531h2V511h2V544h2V508h2V505h2V510h2V492h2V505h2V499h2V526h2V512h2V512h2V544h2V519h2V502h2V513h2V564h2V531h2V537h2V523h2V537h2V487h2V564h2V568h2V603h2V631h2V611h2V609h2V581h2V578h2V563h2V603h2V605h2V608h2V606h2V677h2V730h2V901ZM1179 901V807h2V755h2V777h2V901ZM1189 901V490h2V502h2V575h2V628h2V658h2V555h2V535h2V530h2V510h2V514h2V469h2V540h2V545h2V497h2V502h2V505h2V519h2V545h2V561h2V528h2V541h2V540h2V727h2V901ZM1241 901V754h2V634h2V645h2V651h2V704h2V870h2V826h2V776h2V714h2V743h2V727h2V755h2V773h2V853h2V767h2V751h2V724h2V742h2V737h2V728h2V717h2V687h2V733h2V724h2V616h2V672h2V697h2V700h2V691h2V694h2V691h2V700h2V694h2V684h2V683h2V681h2V689h2V680h2V674h2V724h2V737h2V727h2V681h2V654h2V687h2V656h2V901ZM1337 901V893h2V691h2V659h2V737h2V901ZM1351 901V760h2V737h2V699h2V723h2V730h2V856h2V836h2V901ZM1371 901V739h2V611h2V578h2V571h2V643h2V674h2V664h2V618h2V469h2V466h2V464h2V482h2V535h2V557h2V565h2V628h2V641h2V740h2V901ZM1411 901V826h2V901ZM1419 901V787h2V764h2V724h2V807h2V866h2V901ZM1431 901V479h2V462h2V618h2V618h2V561h2V505h2V532h2V535h2V624h2V691h2V651h2V624h2V601h2V671h2V671h2V631h2V482h2V462h2V449h2V449h2V447h2V464h2V452h2V477h2V482h2V485h2V501h2V489h2V484h2V488h2V485h2V491h2V479h2V489h2V499h2V495h2V500h2V494h2V500h2V489h2V508h2V522h2V525h2V601h2V576h2V644h2V711h2V720h2V901ZM1529 901V764h2V691h2V855h2V689h2V558h2V489h2V524h2V497h2V498h2V482h2V520h2V502h2V528h2V490h2V526h2V499h2V513h2V535h2V574h2V538h2V570h2V516h2V537h2V521h2V567h2V542h2V515h2V517h2V567h2V525h2V510h2V520h2V497h2V506h2V537h2V512h2V531h2V481h2V507h2V480h2V583h2V475h2V498h2V489h2V491h2V442h2V512h2V429h2V548h2V497h2V498h2V520h2V531h2V509h2V597h2V596h2V574h2V575h2V696h2V545h2V660h2V659h2V770h2V901ZM1809 901V667h2V608h2V542h2V537h2V525h2V569h2V591h2V628h2V522h2V504h2V487h2V497h2V460h2V479h2V496h2V485h2V531h2V545h2V565h2V528h2V505h2V499h2V536h2V538h2V477h2V490h2V489h2V486h2V479h2V503h2V492h2V469h2V513h2V542h2V537h2V545h2V555h2V485h2V416h2V440h2V447h2V475h2V478h2V477h2V470h2V466h2V454h2V452h2V451h2V442h2V436h2V436h2V450h2V431h2V437h2V422h2V427h2V422h2V426h2V443h2V422h2V433h2V447h2V479h2V515h2V558h2V559h2V528h2V554h2V555h2V575h2V545h2V551h2V552h2V556h2V550h2V528h2V552h2V548h2V537h2V558h2V575h2V605h2V631h2V444h2V439h2V481h2V518h2V481h2V479h2V477h2V462h2V479h2V480h2V482h2V485h2V526h2V480h2V511h2V470h2V511h2V480h2V490h2V490h2V519h2V489h2V498h2V482h2V516h2V494h2V550h2V499h2V506h2V497h2V520h2V492h2V535h2V519h2V536h2V501h2V495h2V492h2V504h2V490h2V514h2V480h2V494h2V479h2V469h2V492h2V439h2V457h2V465h2V446h2V444h2V432h2V429h2V424h2V426h2V433h2V441h2V448h2V444h2V450h2V432h2V442h2V436h2V472h2V485h2V495h2V512h2V510h2V528h2V545h2V556h2V548h2V441h2V429h2V452h2V460h2V439h2V432h2V421h2V432h2V432h2V434h2V459h2V558h2V555h2V588h2V611h2V636h2V744h2V793h2V760h2V803h2V893h2V830h2V764h2V783h2V901ZM2171 901V800h2V813h2V829h2V818h2V870h2V810h2V737h2V737h2V533h2V667h2V638h2V538h2V595h2V574h2V523h2V529h2V528h2V550h2V548h2V661h2V591h2V485h2V495h2V687h2V542h2V734h2V479h2V644h2V717h2V787h2V873h2V845h2V901ZM2239 901V542h2V598h2V562h2V522h2V578h2V581h2V578h2V542h2V601h2V611h2V598h2V545h2V585h2V598h2V548h2V558h2V604h2V631h2V621h2V545h2V545h2V701h2V699h2V692h2V722h2V740h2V702h2V674h2V725h2V744h2V767h2V789h2V777h2V901ZM2307 901V535h2V490h2V551h2V571h2V591h2V594h2V588h2V634h2V588h2V442h2V440h2V426h2V444h2V449h2V449h2V460h2V450h2V475h2V484h2V560h2V573h2V578h2V661h2V695h2V737h2V797h2V830h2V826h2V818h2V689h2V901ZM2373 901V532h2V497h2V901ZM2379 901V446h2V444h2V466h2V452h2V459h2V454h2V469h2V475h2V558h2V562h2V558h2V593h2V678h2V747h2V754h2V722h2V721h2V712h2V765h2V765h2V764h2V495h2V631h2V505h2V524h2V532h2V518h2V494h2V535h2V532h2V580h2V658h2V658h2V615h2V561h2V555h2V495h2V522h2V535h2V653h2V692h2V611h2V575h2V623h2V644h2V600h2V560h2V619h2V624h2V553h2V592h2V593h2V624h2V586h2V757h2V846h2V800h2V840h2V886h2V901ZM2499 901V843h2V901ZM2505 901V855h2V901ZM2511 901V802h2V460h2V901ZM2519 901V591h2V561h2V561h2V588h2V612h2V598h2V628h2V667h2V654h2V901ZM2541 901V522h2V506h2V487h2V477h2V462h2V490h2V482h2V485h2V501h2V499h2V499h2V489h2V488h2V479h2V481h2V475h2V469h2V471h2V464h2V481h2V474h2V495h2V499h2V489h2V502h2V495h2V474h2V498h2V469h2V469h2V481h2V470h2V462h2V484h2V495h2V495h2V561h2V542h2V549h2V540h2V556h2V547h2V548h2V535h2V542h2V542h2V547h2V518h2V541h2V545h2V585h2V621h2V638h2V664h2V532h2V470h2V502h2V497h2V513h2V532h2V551h2V545h2V518h2V509h2V494h2V490h2V490h2V490h2V498h2V490h2V503h2V559h2V538h2V595h2V576h2V547h2V578h2V624h2V598h2V596h2V535h2V547h2V552h2V494h2V477h2V471h2V462h2V471h2V470h2V472h2V473h2V464h2V477h2V469h2V464h2V901ZM365 901V1337h2V1350h2V1353h2V1357h2V1376h2V1365h2V1379h2V1234h2V1261h2V1330h2V1333h2V1237h2V1085h2V1111h2V1187h2V1206h2V1257h2V1264h2V1273h2V901ZM407 901V1307h2V1312h2V1320h2V1317h2V1322h2V1346h2V1353h2V1366h2V1317h2V1373h2V1355h2V1366h2V1315h2V1320h2V1286h2V1290h2V901ZM447 901V1068h2V1128h2V1181h2V1197h2V1247h2V1227h2V1234h2V1154h2V1003h2V901ZM469 901V1264h2V1330h2V1263h2V1207h2V1174h2V1195h2V1240h2V1253h2V1295h2V1209h2V1171h2V1227h2V1038h2V1167h2V1160h2V1154h2V1152h2V1175h2V1199h2V1119h2V1105h2V1008h2V901ZM629 901V1128h2V1171h2V1264h2V1212h2V1144h2V1273h2V1356h2V1320h2V1330h2V1363h2V1324h2V1317h2V1237h2V1265h2V1320h2V1254h2V1211h2V1353h2V1351h2V1370h2V1364h2V1386h2V1393h2V1389h2V1396h2V1380h2V1379h2V1366h2V1359h2V1370h2V1346h2V1366h2V1370h2V1366h2V1373h2V1376h2V1379h2V1379h2V1376h2V1386h2V1374h2V1386h2V1363h2V1370h2V1356h2V1337h2V1343h2V1353h2V1342h2V1353h2V1298h2V1280h2V1238h2V1237h2V1251h2V1293h2V1264h2V1296h2V1376h2V1334h2V1317h2V1379h2V1313h2V1244h2V1214h2V1171h2V1127h2V1091h2V1055h2V1029h2V1048h2V1055h2V1052h2V1032h2V1220h2V1264h2V1302h2V1250h2V1204h2V1128h2V1060h2V901ZM797 901V1105h2V1201h2V1264h2V1376h2V1376h2V1386h2V1379h2V1376h2V1396h2V1384h2V1399h2V1396h2V1396h2V1399h2V1391h2V1396h2V1373h2V1306h2V1247h2V1238h2V1237h2V1171h2V1092h2V1045h2V1270h2V1231h2V1247h2V1232h2V1247h2V1350h2V1346h2V1386h2V1376h2V1376h2V1343h2V1325h2V1303h2V1316h2V1343h2V1360h2V1365h2V1386h2V1071h2V1396h2V1255h2V1399h2V1178h2V1386h2V1260h2V1371h2V1376h2V1355h2V1173h2V1360h2V1117h2V1360h2V1344h2V1353h2V1120h2V1356h2V1363h2V1339h2V1009h2V1331h2V1202h2V1078h2V1254h2V1265h2V1045h2V1151h2V999h2V986h2V995h2V989h2V975h2V1000h2V1055h2V1012h2V989h2V989h2V1154h2V1234h2V1277h2V1315h2V1356h2V1350h2V1330h2V1346h2V1330h2V1343h2V1343h2V1330h2V1340h2V1336h2V1345h2V1320h2V1322h2V1350h2V1333h2V1340h2V1340h2V1330h2V1231h2V1277h2V1216h2V1201h2V1100h2V1259h2V1068h2V1254h2V1189h2V1249h2V1128h2V1224h2V1098h2V1199h2V1033h2V1187h2V1142h2V1144h2V1181h2V1136h2V1134h2V901ZM1045 901V942h2V1068h2V1071h2V1081h2V1300h2V1360h2V1354h2V1353h2V1362h2V1376h2V1370h2V1366h2V1373h2V1362h2V1373h2V1378h2V1373h2V1352h2V1370h2V1356h2V1366h2V1366h2V1365h2V1366h2V1350h2V1353h2V1346h2V1342h2V1353h2V1343h2V1360h2V1360h2V1337h2V1356h2V1353h2V1348h2V1356h2V1334h2V1128h2V1350h2V1094h2V1346h2V1188h2V1348h2V1176h2V1345h2V1221h2V1340h2V1308h2V1307h2V1307h2V1234h2V1214h2V1234h2V1255h2V1216h2V1189h2V1187h2V1194h2V1189h2V1191h2V1172h2V1181h2V1105h2V1085h2V1069h2V1075h2V1015h2V901ZM1183 901V1065h2V1027h2V1164h2V1165h2V1181h2V1265h2V1223h2V1235h2V1236h2V1257h2V1356h2V1326h2V1320h2V1388h2V1334h2V1300h2V1366h2V1309h2V1283h2V1371h2V1324h2V1264h2V1307h2V1245h2V1225h2V1199h2V1138h2V1138h2V1121h2V1080h2V901ZM1249 901V975h2V1070h2V1073h2V1078h2V1056h2V1090h2V1101h2V1087h2V1129h2V1108h2V1092h2V1095h2V1094h2V1108h2V1085h2V1071h2V1085h2V1096h2V1141h2V1250h2V1088h2V1074h2V1081h2V1086h2V1114h2V1078h2V1062h2V1095h2V1108h2V1128h2V1118h2V1108h2V1101h2V1114h2V1126h2V1148h2V1112h2V1121h2V1061h2V1069h2V1114h2V1141h2V901ZM1337 901V1114h2V1101h2V913h2V972h2V985h2V1118h2V999h2V1042h2V901ZM1357 901V975h2V1002h2V989h2V1149h2V901ZM1369 901V1141h2V1121h2V901ZM1377 901V1148h2V1224h2V1234h2V1237h2V1244h2V1320h2V1373h2V1389h2V1353h2V1275h2V1259h2V1240h2V1164h2V1131h2V1080h2V1028h2V992h2V1045h2V1095h2V901ZM1419 901V1045h2V901ZM1429 901V926h2V1166h2V901ZM1435 901V1303h2V1322h2V901ZM1445 901V1065h2V1217h2V1201h2V1196h2V1207h2V1164h2V1093h2V1088h2V1166h2V1254h2V1379h2V1389h2V1391h2V1396h2V1373h2V1383h2V1376h2V1361h2V1370h2V1363h2V1362h2V1360h2V1354h2V1356h2V1353h2V1343h2V1350h2V1328h2V1346h2V1345h2V1335h2V1320h2V1299h2V1313h2V1275h2V1243h2V1230h2V1154h2V1013h2V1114h2V1129h2V1088h2V1096h2V1118h2V1118h2V1118h2V1323h2V1247h2V1370h2V1393h2V1386h2V1386h2V1346h2V1353h2V1363h2V1363h2V1361h2V1336h2V1192h2V1336h2V1063h2V1333h2V1333h2V1336h2V1376h2V1378h2V1043h2V1383h2V1061h2V1386h2V1072h2V1389h2V1389h2V1409h2V1408h2V1409h2V1257h2V1389h2V1409h2V1401h2V1196h2V1409h2V1138h2V1409h2V1210h2V1409h2V1197h2V1409h2V1079h2V1409h2V1145h2V1409h2V1268h2V1409h2V1214h2V1370h2V1097h2V1217h2V1386h2V1370h2V1028h2V1322h2V1008h2V1022h2V1091h2V901ZM1811 901V1164h2V1280h2V1263h2V1254h2V1255h2V1260h2V1330h2V1321h2V1317h2V1365h2V1360h2V1366h2V1303h2V1277h2V1270h2V1303h2V1268h2V1247h2V1236h2V1293h2V1297h2V1293h2V1300h2V1302h2V1293h2V1307h2V1304h2V1313h2V1320h2V1313h2V1333h2V1323h2V1317h2V1287h2V1273h2V1264h2V1353h2V1376h2V1376h2V1393h2V1376h2V1370h2V1366h2V1357h2V1379h2V1381h2V1386h2V1399h2V1393h2V1419h2V1404h2V1406h2V1413h2V1414h2V1419h2V1411h2V1413h2V1419h2V1410h2V1413h2V1399h2V1355h2V1340h2V1283h2V1254h2V1235h2V1240h2V1237h2V1230h2V1250h2V1252h2V1264h2V1264h2V1253h2V1250h2V1254h2V1251h2V1249h2V1277h2V1235h2V1252h2V1254h2V1225h2V1320h2V1399h2V1388h2V1399h2V1107h2V1386h2V1159h2V1379h2V1237h2V1370h2V1140h2V1356h2V1138h2V1339h2V1353h2V1349h2V1353h2V1351h2V1331h2V1346h2V1340h2V1336h2V1340h2V1328h2V1346h2V1336h2V1350h2V1353h2V1350h2V1353h2V1344h2V1353h2V1355h2V1354h2V1353h2V1352h2V1353h2V1353h2V1145h2V1356h2V1207h2V1360h2V1106h2V1353h2V1247h2V1360h2V1346h2V1399h2V1408h2V1436h2V1436h2V1422h2V1436h2V1429h2V1436h2V1436h2V1428h2V1436h2V1428h2V1436h2V1436h2V1419h2V1413h2V1376h2V1361h2V1350h2V1326h2V1320h2V1280h2V1300h2V1287h2V1292h2V1292h2V1353h2V1359h2V1399h2V1384h2V1386h2V1413h2V1389h2V1413h2V1377h2V1360h2V1323h2V1267h2V1257h2V1187h2V1091h2V1071h2V1075h2V1061h2V1055h2V1045h2V1009h2V989h2V992h2V1071h2V929h2V901ZM2183 901V1139h2V1114h2V1171h2V1189h2V1191h2V1202h2V1187h2V1173h2V1199h2V1244h2V1244h2V1260h2V1231h2V1230h2V1197h2V1287h2V901ZM2223 901V972h2V1323h2V1068h2V1061h2V1056h2V1052h2V1005h2V995h2V1217h2V1131h2V1300h2V1188h2V1280h2V927h2V1283h2V1057h2V1295h2V994h2V1318h2V1184h2V1303h2V1313h2V1315h2V1054h2V1201h2V999h2V901ZM2277 901V1164h2V1164h2V1083h2V1068h2V1081h2V947h2V901ZM2293 901V1105h2V1015h2V901ZM2301 901V915h2V959h2V901ZM2307 901V1159h2V1213h2V1259h2V1250h2V1240h2V1234h2V1216h2V1220h2V1224h2V1293h2V1337h2V1379h2V1381h2V1368h2V1376h2V1368h2V1350h2V1336h2V1313h2V1273h2V1240h2V1217h2V1193h2V1174h2V1088h2V1075h2V1068h2V992h2V985h2V901ZM2371 901V1018h2V1068h2V1143h2V1356h2V1355h2V1376h2V1396h2V1384h2V1389h2V1386h2V1371h2V1356h2V1353h2V1254h2V1227h2V1192h2V1171h2V1121h2V1132h2V1143h2V1114h2V1017h2V1055h2V995h2V939h2V1109h2V1141h2V1181h2V1241h2V1283h2V1283h2V1313h2V1257h2V1239h2V1244h2V1220h2V1185h2V1148h2V1234h2V1333h2V1254h2V1297h2V1288h2V1292h2V1287h2V1153h2V1250h2V979h2V1131h2V1142h2V1279h2V1065h2V1292h2V1165h2V1212h2V1148h2V1199h2V1078h2V989h2V985h2V963h2V952h2V962h2V901ZM2507 901V1025h2V1022h2V901ZM2513 901V1242h2V1322h2V901ZM2525 901V1091h2V1114h2V1130h2V1161h2V1181h2V1201h2V1164h2V1161h2V1181h2V1240h2V1340h2V1363h2V1356h2V1355h2V1360h2V1348h2V1350h2V1353h2V1355h2V1360h2V1357h2V1370h2V1366h2V1361h2V1370h2V1363h2V1375h2V1366h2V1350h2V1350h2V1350h2V1356h2V1353h2V1347h2V1356h2V1345h2V1356h2V1356h2V1337h2V1356h2V1344h2V1350h2V1300h2V1250h2V1237h2V1245h2V1237h2V1240h2V1267h2V1257h2V1250h2V1227h2V1250h2V1257h2V1254h2V1287h2V1264h2V1250h2V1220h2V1192h2V1214h2V1217h2V1297h2V1361h2V1344h2V1345h2V1295h2V1267h2V1234h2V1297h2V1306h2V1326h2V1335h2V1330h2V1317h2V1326h2V1307h2V1325h2V1293h2V1292h2V1266h2V1250h2V1043h2V1305h2V1069h2V1254h2V1135h2V1254h2V1180h2V1317h2V1099h2V1280h2V1333h2V1332h2V1353h2V1363h2V1378h2V1376h2V1379h2V1373h2V1381h2V1379h2V1330h2V901Z"/><path fill="#7b83e1" d="M365 901V475h2V493h2V486h2V485h2V512h2V499h2V564h2V648h2V622h2V532h2V572h2V622h2V651h2V750h2V598h2V609h2V636h2V598h2V652h2V697h2V666h2V624h2V578h2V570h2V569h2V542h2V533h2V550h2V525h2V517h2V495h2V491h2V465h2V487h2V499h2V531h2V565h2V602h2V638h2V768h2V863h2V790h2V867h2V901ZM455 901V658h2V820h2V901ZM461 901V821h2V747h2V754h2V740h2V678h2V598h2V621h2V614h2V662h2V707h2V723h2V659h2V624h2V676h2V697h2V757h2V780h2V780h2V732h2V664h2V685h2V681h2V717h2V730h2V750h2V770h2V779h2V773h2V862h2V901ZM629 901V627h2V598h2V585h2V649h2V681h2V525h2V521h2V505h2V508h2V528h2V535h2V545h2V532h2V560h2V575h2V559h2V532h2V508h2V499h2V479h2V479h2V470h2V452h2V495h2V487h2V459h2V516h2V556h2V475h2V504h2V528h2V525h2V526h2V518h2V495h2V500h2V496h2V492h2V500h2V514h2V502h2V465h2V495h2V499h2V526h2V536h2V542h2V527h2V502h2V530h2V528h2V567h2V565h2V579h2V591h2V571h2V538h2V524h2V499h2V496h2V485h2V528h2V555h2V576h2V588h2V628h2V833h2V813h2V818h2V797h2V830h2V837h2V830h2V901ZM777 901V571h2V631h2V901ZM785 901V658h2V668h2V628h2V635h2V638h2V678h2V694h2V664h2V532h2V519h2V492h2V502h2V502h2V465h2V498h2V489h2V465h2V480h2V508h2V493h2V472h2V482h2V517h2V558h2V603h2V631h2V648h2V747h2V829h2V840h2V697h2V525h2V618h2V705h2V773h2V515h2V511h2V499h2V510h2V512h2V534h2V555h2V593h2V598h2V515h2V536h2V555h2V528h2V505h2V545h2V512h2V510h2V523h2V508h2V502h2V499h2V538h2V553h2V535h2V549h2V532h2V576h2V588h2V585h2V601h2V603h2V598h2V635h2V631h2V614h2V687h2V740h2V694h2V661h2V664h2V787h2V860h2V875h2V901ZM947 901V863h2V834h2V787h2V901ZM955 901V797h2V641h2V598h2V555h2V546h2V518h2V534h2V528h2V532h2V526h2V515h2V526h2V532h2V568h2V545h2V542h2V527h2V508h2V538h2V532h2V540h2V535h2V547h2V532h2V568h2V555h2V648h2V649h2V631h2V641h2V648h2V631h2V638h2V652h2V670h2V671h2V697h2V684h2V693h2V710h2V707h2V701h2V727h2V734h2V730h2V780h2V807h2V764h2V727h2V571h2V571h2V572h2V555h2V561h2V558h2V562h2V552h2V571h2V548h2V562h2V552h2V558h2V542h2V546h2V542h2V551h2V532h2V535h2V528h2V533h2V525h2V535h2V531h2V532h2V547h2V545h2V564h2V542h2V559h2V542h2V548h2V535h2V571h2V565h2V565h2V545h2V553h2V555h2V566h2V565h2V582h2V538h2V544h2V538h2V532h2V565h2V651h2V666h2V674h2V671h2V668h2V664h2V672h2V661h2V679h2V677h2V718h2V697h2V744h2V787h2V901ZM1179 901V863h2V840h2V870h2V901ZM1189 901V624h2V631h2V628h2V684h2V707h2V618h2V591h2V591h2V598h2V616h2V565h2V606h2V608h2V598h2V619h2V588h2V601h2V601h2V616h2V601h2V614h2V605h2V901ZM1241 901V830h2V661h2V717h2V747h2V870h2V901ZM1253 901V870h2V847h2V803h2V791h2V773h2V885h2V855h2V863h2V790h2V797h2V787h2V797h2V797h2V805h2V790h2V780h2V788h2V777h2V661h2V741h2V777h2V780h2V773h2V770h2V764h2V776h2V759h2V750h2V758h2V750h2V751h2V758h2V747h2V783h2V793h2V764h2V774h2V757h2V757h2V768h2V901ZM1339 901V757h2V836h2V797h2V901ZM1351 901V826h2V787h2V764h2V783h2V800h2V870h2V901ZM1371 901V797h2V691h2V687h2V687h2V715h2V684h2V711h2V654h2V508h2V500h2V479h2V532h2V542h2V575h2V605h2V631h2V740h2V860h2V901ZM1411 901V863h2V901ZM1419 901V810h2V800h2V856h2V901ZM1431 901V624h2V565h2V901ZM1439 901V618h2V558h2V901ZM1445 901V601h2V674h2V697h2V671h2V674h2V664h2V691h2V714h2V691h2V545h2V492h2V485h2V492h2V472h2V489h2V469h2V511h2V508h2V495h2V515h2V525h2V492h2V501h2V515h2V512h2V489h2V499h2V512h2V525h2V522h2V515h2V545h2V528h2V548h2V572h2V568h2V621h2V644h2V687h2V757h2V764h2V901ZM1529 901V830h2V856h2V863h2V757h2V631h2V545h2V525h2V514h2V499h2V499h2V521h2V542h2V529h2V512h2V527h2V515h2V545h2V570h2V575h2V583h2V571h2V555h2V538h2V605h2V568h2V566h2V561h2V570h2V568h2V586h2V555h2V564h2V542h2V558h2V538h2V539h2V532h2V538h2V508h2V578h2V584h2V578h2V499h2V513h2V492h2V499h2V513h2V548h2V631h2V577h2V499h2V628h2V532h2V585h2V598h2V669h2V575h2V641h2V697h2V585h2V661h2V734h2V901ZM1809 901V750h2V697h2V631h2V634h2V614h2V650h2V644h2V638h2V532h2V519h2V515h2V500h2V485h2V502h2V525h2V548h2V591h2V614h2V631h2V631h2V595h2V578h2V603h2V605h2V561h2V583h2V568h2V574h2V565h2V575h2V575h2V538h2V567h2V598h2V614h2V631h2V631h2V522h2V462h2V529h2V475h2V508h2V522h2V532h2V475h2V492h2V499h2V502h2V487h2V465h2V469h2V472h2V474h2V462h2V471h2V455h2V453h2V449h2V469h2V481h2V449h2V464h2V479h2V505h2V575h2V611h2V616h2V624h2V652h2V634h2V655h2V631h2V647h2V628h2V631h2V628h2V618h2V630h2V624h2V614h2V622h2V624h2V661h2V674h2V485h2V496h2V482h2V532h2V482h2V561h2V554h2V522h2V547h2V532h2V561h2V532h2V527h2V508h2V512h2V505h2V512h2V508h2V523h2V515h2V520h2V522h2V536h2V512h2V517h2V532h2V551h2V522h2V525h2V512h2V521h2V525h2V536h2V543h2V537h2V547h2V532h2V530h2V505h2V513h2V515h2V512h2V495h2V496h2V492h2V528h2V469h2V472h2V472h2V515h2V494h2V459h2V465h2V459h2V505h2V483h2V462h2V475h2V465h2V493h2V485h2V518h2V472h2V495h2V506h2V512h2V523h2V532h2V545h2V573h2V570h2V565h2V518h2V459h2V517h2V495h2V449h2V444h2V432h2V472h2V479h2V459h2V489h2V585h2V578h2V611h2V707h2V744h2V795h2V813h2V797h2V893h2V901ZM2163 901V863h2V840h2V899h2V901ZM2171 901V846h2V870h2V879h2V873h2V901ZM2181 901V863h2V901ZM2187 901V674h2V697h2V681h2V661h2V664h2V661h2V638h2V635h2V631h2V646h2V631h2V694h2V623h2V532h2V538h2V901ZM2219 901V631h2V901ZM2223 901V644h2V658h2V787h2V889h2V896h2V890h2V901ZM2239 901V598h2V707h2V653h2V578h2V674h2V656h2V628h2V608h2V707h2V707h2V664h2V598h2V656h2V667h2V598h2V658h2V700h2V707h2V793h2V614h2V614h2V754h2V790h2V843h2V824h2V797h2V798h2V764h2V876h2V881h2V876h2V896h2V901ZM2307 901V687h2V621h2V630h2V618h2V658h2V702h2V684h2V664h2V714h2V588h2V539h2V482h2V516h2V485h2V482h2V500h2V512h2V550h2V532h2V565h2V603h2V624h2V697h2V734h2V764h2V830h2V876h2V863h2V863h2V797h2V901ZM2373 901V734h2V598h2V901ZM2379 901V489h2V469h2V490h2V489h2V495h2V485h2V497h2V505h2V571h2V584h2V601h2V631h2V705h2V764h2V780h2V780h2V768h2V747h2V810h2V837h2V840h2V651h2V730h2V598h2V626h2V614h2V628h2V611h2V628h2V598h2V638h2V694h2V707h2V703h2V631h2V631h2V545h2V568h2V581h2V697h2V772h2V664h2V648h2V731h2V754h2V697h2V644h2V678h2V664h2V595h2V625h2V644h2V644h2V664h2V797h2V876h2V846h2V889h2V901ZM2499 901V879h2V901ZM2505 901V889h2V901ZM2511 901V846h2V515h2V901ZM2519 901V631h2V719h2V605h2V631h2V682h2V681h2V697h2V677h2V697h2V901ZM2541 901V558h2V555h2V548h2V495h2V502h2V530h2V542h2V532h2V534h2V532h2V522h2V508h2V505h2V505h2V513h2V495h2V492h2V492h2V482h2V516h2V525h2V505h2V515h2V525h2V515h2V508h2V499h2V527h2V532h2V499h2V505h2V499h2V495h2V499h2V499h2V548h2V628h2V641h2V645h2V631h2V659h2V638h2V644h2V631h2V677h2V628h2V634h2V624h2V639h2V631h2V638h2V664h2V687h2V752h2V571h2V515h2V512h2V542h2V572h2V591h2V607h2V608h2V548h2V548h2V542h2V515h2V517h2V508h2V519h2V512h2V555h2V591h2V581h2V605h2V626h2V631h2V664h2V679h2V631h2V638h2V585h2V588h2V565h2V552h2V532h2V521h2V508h2V511h2V505h2V522h2V529h2V495h2V501h2V495h2V492h2V901ZM365 901V1289h2V1296h2V1300h2V1282h2V1293h2V1267h2V1220h2V1161h2V1185h2V1237h2V1154h2V1097h2V1055h2V1075h2V1138h2V1155h2V1194h2V1206h2V1224h2V901ZM407 901V1240h2V1243h2V1254h2V1207h2V1206h2V1260h2V1278h2V1300h2V1207h2V1303h2V1288h2V1287h2V1254h2V1270h2V1253h2V1254h2V901ZM447 901V1008h2V1105h2V1138h2V1134h2V1164h2V1154h2V1151h2V1088h2V976h2V901ZM469 901V1187h2V1270h2V1211h2V1171h2V1121h2V1131h2V1181h2V1189h2V1220h2V1150h2V1118h2V1055h2V1037h2V1105h2V1097h2V1105h2V1106h2V1119h2V1134h2V1078h2V1055h2V1007h2V901ZM629 901V1088h2V1128h2V1214h2V1169h2V1143h2V1220h2V1280h2V1287h2V1258h2V1264h2V1253h2V1254h2V1236h2V1236h2V1270h2V1231h2V1210h2V1283h2V1279h2V1297h2V1308h2V1320h2V1313h2V1298h2V1303h2V1212h2V1161h2V1330h2V1299h2V1244h2V1259h2V1280h2V1270h2V1277h2V1293h2V1283h2V1287h2V1307h2V1301h2V1297h2V1284h2V1307h2V1263h2V1254h2V1224h2V1174h2V1187h2V1270h2V1264h2V1287h2V1257h2V1254h2V1206h2V1207h2V1220h2V1234h2V1260h2V1271h2V1310h2V1281h2V1277h2V1317h2V1244h2V1210h2V1207h2V1114h2V1059h2V1035h2V965h2V937h2V969h2V985h2V992h2V901ZM777 901V1154h2V1220h2V1237h2V1187h2V1144h2V1127h2V1059h2V901ZM797 901V1104h2V1138h2V1263h2V1297h2V1298h2V1303h2V1320h2V1306h2V1330h2V1310h2V1303h2V1293h2V1296h2V1330h2V1281h2V1293h2V1247h2V1245h2V1246h2V1231h2V1227h2V1164h2V1076h2V1022h2V1171h2V1175h2V1181h2V1174h2V1207h2V1287h2V1291h2V1303h2V1311h2V1320h2V1273h2V1233h2V1237h2V1238h2V1270h2V1297h2V1300h2V1313h2V1071h2V1320h2V1255h2V1230h2V1178h2V1310h2V1260h2V1172h2V1068h2V1178h2V1173h2V1287h2V1117h2V1214h2V1214h2V1214h2V1120h2V1140h2V1148h2V1103h2V1009h2V1088h2V1066h2V1061h2V975h2V1045h2V1032h2V1012h2V939h2V937h2V952h2V942h2V921h2V955h2V985h2V985h2V962h2V988h2V1153h2V1233h2V1276h2V1251h2V1280h2V1293h2V1230h2V1206h2V1244h2V1287h2V1290h2V1245h2V1206h2V1201h2V1217h2V1264h2V1265h2V1277h2V1288h2V1293h2V1277h2V1131h2V1231h2V1236h2V1216h2V1154h2V1100h2V1164h2V1068h2V1164h2V1189h2V1201h2V1128h2V1137h2V1098h2V1121h2V1033h2V1108h2V1099h2V1095h2V1101h2V1083h2V1068h2V901ZM1047 901V992h2V1070h2V1080h2V1230h2V1227h2V1218h2V1300h2V1301h2V1303h2V1240h2V1255h2V1303h2V1266h2V1250h2V1303h2V1244h2V1238h2V1297h2V1264h2V1257h2V1287h2V1267h2V1267h2V1265h2V1273h2V1270h2V1268h2V1267h2V1261h2V1267h2V1254h2V1264h2V1300h2V1257h2V1241h2V1234h2V1252h2V1128h2V1293h2V1094h2V1217h2V1188h2V1290h2V1176h2V1232h2V1221h2V1191h2V1205h2V1277h2V1244h2V1177h2V1142h2V1124h2V1217h2V1128h2V1123h2V1138h2V1171h2V1155h2V1121h2V1094h2V1088h2V1061h2V1012h2V1019h2V1035h2V964h2V901ZM1183 901V942h2V1026h2V1028h2V1085h2V1164h2V1187h2V1131h2V1091h2V1167h2V1234h2V1320h2V1178h2V1101h2V1303h2V1222h2V1191h2V1287h2V1213h2V1171h2V1254h2V1205h2V1201h2V1214h2V1171h2V1140h2V1167h2V1081h2V901ZM1239 901V1071h2V1015h2V901ZM1249 901V974h2V999h2V980h2V1018h2V976h2V995h2V1048h2V1034h2V1035h2V1015h2V1011h2V1012h2V1005h2V1038h2V1002h2V1006h2V1022h2V1002h2V1054h2V1126h2V1065h2V1038h2V1022h2V1007h2V1028h2V1032h2V1032h2V1038h2V1045h2V1055h2V1048h2V1029h2V1052h2V1041h2V1055h2V1068h2V1038h2V1035h2V1018h2V1010h2V1035h2V1032h2V901ZM1337 901V1045h2V901ZM1341 901V913h2V971h2V985h2V1055h2V999h2V975h2V901ZM1357 901V975h2V940h2V929h2V982h2V901ZM1369 901V1025h2V901ZM1377 901V1147h2V1161h2V1088h2V1142h2V1240h2V1277h2V1320h2V1336h2V1277h2V1247h2V1156h2V1091h2V1148h2V1061h2V1028h2V996h2V991h2V1002h2V995h2V901ZM1419 901V946h2V901ZM1429 901V909h2V922h2V901ZM1435 901V1184h2V1204h2V901ZM1445 901V1064h2V1128h2V1128h2V1117h2V1121h2V1095h2V1084h2V1087h2V1101h2V1253h2V1310h2V1320h2V1311h2V1330h2V1301h2V1313h2V1297h2V1289h2V1317h2V1277h2V1282h2V1310h2V1303h2V1303h2V1280h2V1277h2V1303h2V1288h2V1273h2V1300h2V1269h2V1270h2V1232h2V1244h2V1237h2V1191h2V1177h2V1153h2V1012h2V1045h2V1068h2V1075h2V1041h2V1035h2V1045h2V1042h2V1118h2V1246h2V1307h2V1320h2V1121h2V1307h2V1275h2V1260h2V1297h2V1201h2V1287h2V1280h2V1192h2V1280h2V1063h2V1273h2V1164h2V1273h2V1230h2V1164h2V1043h2V1290h2V1061h2V1290h2V1072h2V1293h2V1146h2V1300h2V1265h2V1260h2V1257h2V1279h2V1270h2V1281h2V1196h2V1220h2V1138h2V1303h2V1210h2V1234h2V1197h2V1310h2V1079h2V1287h2V1145h2V1237h2V1268h2V1151h2V1214h2V1203h2V1097h2V1131h2V1287h2V1105h2V1028h2V1224h2V1008h2V1021h2V1025h2V901ZM1811 901V1091h2V1171h2V1162h2V1161h2V1140h2V1158h2V1270h2V1236h2V1277h2V1307h2V1301h2V1307h2V1264h2V1232h2V1254h2V1247h2V1206h2V1171h2V1195h2V1207h2V1197h2V1202h2V1234h2V1234h2V1215h2V1230h2V1230h2V1234h2V1224h2V1214h2V1244h2V1204h2V1204h2V1204h2V1185h2V1171h2V1280h2V1330h2V1314h2V1323h2V1289h2V1287h2V1310h2V1293h2V1300h2V1286h2V1323h2V1317h2V1312h2V1303h2V1323h2V1336h2V1330h2V1325h2V1340h2V1331h2V1330h2V1353h2V1347h2V1346h2V1330h2V1314h2V1320h2V1267h2V1201h2V1173h2V1171h2V1227h2V1194h2V1164h2V1152h2V1167h2V1177h2V1157h2V1174h2V1184h2V1176h2V1181h2V1177h2V1170h2V1174h2V1141h2V1171h2V1319h2V1333h2V1312h2V1280h2V1107h2V1237h2V1159h2V1154h2V1237h2V1126h2V1140h2V1237h2V1138h2V1213h2V1293h2V1280h2V1290h2V1283h2V1271h2V1277h2V1273h2V1277h2V1277h2V1243h2V1270h2V1259h2V1270h2V1277h2V1267h2V1280h2V1266h2V1273h2V1283h2V1271h2V1264h2V1224h2V1220h2V1297h2V1145h2V1297h2V1207h2V1300h2V1106h2V1206h2V1247h2V1292h2V1330h2V1333h2V1308h2V1282h2V1336h2V1321h2V1298h2V1318h2V1333h2V1297h2V1293h2V1336h2V1316h2V1317h2V1326h2V1278h2V1320h2V1297h2V1289h2V1287h2V1272h2V1273h2V1260h2V1227h2V1207h2V1237h2V1291h2V1303h2V1296h2V1303h2V1307h2V1330h2V1346h2V1313h2V1323h2V1301h2V1317h2V1214h2V1217h2V1201h2V1098h2V1032h2V1020h2V1022h2V1022h2V989h2V975h2V969h2V962h2V959h2V1005h2V901ZM2183 901V1108h2V1008h2V1121h2V1065h2V1106h2V1187h2V1114h2V1099h2V1114h2V1158h2V1160h2V1164h2V1149h2V1164h2V1108h2V1264h2V901ZM2223 901V971h2V1245h2V1067h2V1012h2V999h2V989h2V966h2V947h2V1204h2V1131h2V1061h2V1188h2V1005h2V927h2V939h2V1057h2V1086h2V994h2V1303h2V1184h2V1114h2V1038h2V1181h2V1054h2V1095h2V989h2V901ZM2277 901V922h2V1088h2V1006h2V979h2V1035h2V938h2V901ZM2293 901V1028h2V922h2V901ZM2301 901V902h2V922h2V901ZM2307 901V1114h2V1087h2V1177h2V1144h2V1137h2V1154h2V1134h2V1151h2V1085h2V1217h2V1257h2V1320h2V1317h2V1294h2V1303h2V1290h2V1286h2V1280h2V1267h2V1202h2V1207h2V1177h2V1146h2V1124h2V1065h2V1024h2V995h2V931h2V982h2V901ZM2371 901V949h2V909h2V901ZM2377 901V1293h2V1287h2V1310h2V1330h2V1318h2V1313h2V1330h2V1317h2V1313h2V1307h2V1184h2V1181h2V1177h2V1170h2V1052h2V1088h2V1121h2V1018h2V909h2V955h2V943h2V938h2V1071h2V1112h2V1154h2V1165h2V1187h2V1201h2V1220h2V1191h2V1160h2V1164h2V1121h2V1108h2V1091h2V1191h2V1254h2V1197h2V1220h2V1210h2V1204h2V1061h2V1153h2V1131h2V979h2V901ZM2469 901V1142h2V1129h2V1065h2V1058h2V1165h2V1155h2V1134h2V1148h2V1075h2V922h2V922h2V901ZM2493 901V912h2V901ZM2507 901V969h2V901ZM2513 901V1241h2V1244h2V901ZM2525 901V1090h2V1105h2V1090h2V1101h2V1090h2V1121h2V1095h2V1075h2V1081h2V1239h2V1270h2V1300h2V1260h2V1218h2V1273h2V1264h2V1280h2V1270h2V1273h2V1287h2V1273h2V1290h2V1287h2V1279h2V1310h2V1299h2V1310h2V1275h2V1270h2V1273h2V1276h2V1300h2V1273h2V1258h2V1303h2V1265h2V1250h2V1303h2V1292h2V1297h2V1270h2V1270h2V1260h2V1249h2V1171h2V1159h2V1163h2V1171h2V1164h2V1152h2V1164h2V1165h2V1171h2V1171h2V1155h2V1174h2V1164h2V1154h2V1141h2V1094h2V1114h2V1181h2V1220h2V1283h2V1273h2V1293h2V1207h2V1147h2V1081h2V1240h2V1249h2V1264h2V1287h2V1212h2V1236h2V1283h2V1279h2V1280h2V1244h2V1224h2V1195h2V1197h2V1043h2V1227h2V1069h2V946h2V1135h2V1042h2V1180h2V1254h2V1099h2V1230h2V1264h2V1255h2V1300h2V1298h2V1297h2V1280h2V1323h2V1297h2V1297h2V1307h2V1299h2V901Z"/><path d="M525 901V785H527V732H529V759H531V806H533V901H535M543 901V828H545V803H547V819H549V844H551V901H553M561 901V764H563V823H565V901H567M573 901V749H575V802H577V901H579M579 901V805H581V773H583V813H585V901H587M597 901V793H599V821H601V901H603M609 901V761H611V819H613V901H615M617 901V798H619V834H621V901H623M517 901V1018H519V1094H521V1054H523V1003H525V901H527M537 901V967H539V938H541V901H543M555 901V1043H557V987H559V901H561M569 901V1034H571V983H573V901H575M591 901V966H593V989H595V901H597M603 901V1053H605V1009H607V901H609M623 901V952H625V987H627V901H629M1657 901V697H1659V901H1661M1677 901V739H1679V901H1681M1689 901V783H1691V737H1693V805H1695V901H1697M1705 901V774H1707V814H1709V901H1711M1739 901V817H1741V901H1743M1755 901V845H1757V901H1759M1773 901V837H1775V791H1777V839H1779V901H1781M1789 901V787H1791V746H1793V790H1795V827H1797V901H1799M1801 901V860H1803V901H1805M1805 901V826H1807V801H1809V901H1811M1661 901V982H1663V1004H1665V1041H1667V1006H1669V901H1671M1681 901V1007H1683V1060H1685V1011H1687V901H1689M1697 901V977H1699V1028H1701V996H1703V901H1705M1711 901V985H1713V960H1715V901H1717M1733 901V950H1735V938H1737V901H1739M1745 901V965H1747V987H1749V901H1751M1761 901V947H1763V901H1765M1765 901V943H1767V901H1769M1779 901V965H1781V1004H1783V978H1785V949H1787V901H1789M1799 901V1063H1801V1015H1803V974H1805V901H1807" fill="none" stroke="#5f6bda" stroke-width="2"/></g>
<rect x="153" y="141" width="10" height="24" fill="#5b84ea"/><rect x="170" y="141" width="10" height="24" fill="#5b84ea"/><path d="M229 137 L259 153 L229 169Z" fill="#83d489"/><rect x="307" y="141" width="25" height="25" fill="#c7b79f"/><path d="M383 140v26M384 153l13-13v26zM396 153l13-13v26z" fill="#b9a1e6" stroke="#b9a1e6" stroke-width="2"/><path d="M484 140v26M483 153l-13-13v26zM471 153l-13-13v26z" fill="#b9a1e6" stroke="#b9a1e6" stroke-width="2"/><circle cx="563" cy="153" r="15.5" fill="#cf8f90"/><path d="M655 112h16M655 142h16M663 112v30" stroke="#000" stroke-width="2.8" fill="none"/><path d="M706 106h17l-8.5 10zM706 146h17l-8.5-10z" fill="#fff" stroke="#222" stroke-width="1.5"/><path d="M691 126 L714 124 L739 116" stroke="#7d83e0" stroke-width="5" fill="none"/><circle cx="714" cy="124" r="3" fill="#fff" stroke="#7d83e0" stroke-width="1"/><path d="M775 113l7 3-11 24-8 6 1-10z" fill="#fff" stroke="#000" stroke-width="2.4" stroke-linejoin="round"/><path d="M763 146l1-9 6 3z" fill="#000"/><circle cx="666" cy="176" r="9" fill="#fff" stroke="#222" stroke-width="1.6"/><path d="M659 183l-13 12" stroke="#111" stroke-width="4.5"/><path d="M700 182h30" stroke="#000" stroke-width="3"/><path d="M698 182l9-7v14zM732 182l-9-7v14z" fill="#000"/><path d="M771 169v26M760 175l22 14M782 175l-22 14" stroke="#000" stroke-width="3.4" fill="none"/><path d="M850.500 137.5h14.500l-7.250 7.500z" fill="#000"/><path d="M850.500 193.5h14.500l-7.250 7.500z" fill="#000"/><g transform="translate(832.5 107.5) scale(1.0)"><path d="M0 9.500h7l4.500-7v23l-4.500-7h-7z" fill="#111"/><path d="M16 8q4 6 0 12M20.500 2.500q7.500 11.500 0 23" stroke="#111" stroke-width="1.7" fill="none"/></g><g transform="translate(826 163) scale(0.98)"><path d="M0.500 39.500L6 34" stroke="#000" stroke-width="2"/><path d="M5 35L24 16" stroke="#000" stroke-width="5.4"/><path d="M8.500 29.500L22 16" stroke="#fff" stroke-width="1.3" stroke-dasharray="1.6 1.6"/><circle cx="29.500" cy="10.500" r="9.300" fill="#e2e2e2" stroke="#000" stroke-width="2.2"/><path d="M30 2.500a8 8 0 0 1 6.500 12.500q-3 4-8 3.300z" fill="#c2c2c2"/><path d="M23.500 5l13 11" stroke="#111" stroke-width="1.6" stroke-dasharray="2 1.2"/><path d="M22 17q4 4 10 2.500" stroke="#000" stroke-width="3" fill="none"/></g><path d="M1881.0 121.0l6.5-6.5 6.5 6.5M1881.0 130.0l6.5 6.5 6.5-6.5" stroke="#fff" stroke-width="2.6" fill="none" stroke-linecap="round" stroke-linejoin="round"/><g transform="translate(1911 108) scale(0.98)"><path d="M0.500 39.500L6 34" stroke="#000" stroke-width="2"/><path d="M5 35L24 16" stroke="#000" stroke-width="5.4"/><path d="M8.500 29.500L22 16" stroke="#fff" stroke-width="1.3" stroke-dasharray="1.6 1.6"/><circle cx="29.500" cy="10.500" r="9.300" fill="#e2e2e2" stroke="#000" stroke-width="2.2"/><path d="M30 2.500a8 8 0 0 1 6.500 12.500q-3 4-8 3.300z" fill="#c2c2c2"/><path d="M23.500 5l13 11" stroke="#111" stroke-width="1.6" stroke-dasharray="2 1.2"/><path d="M22 17q4 4 10 2.500" stroke="#000" stroke-width="3" fill="none"/></g><path d="M2175.0 121.0l6.5-6.5 6.5 6.5M2175.0 130.0l6.5 6.5 6.5-6.5" stroke="#fff" stroke-width="2.6" fill="none" stroke-linecap="round" stroke-linejoin="round"/><path d="M2341.0 121.0l6.5-6.5 6.5 6.5M2341.0 130.0l6.5 6.5 6.5-6.5" stroke="#fff" stroke-width="2.6" fill="none" stroke-linecap="round" stroke-linejoin="round"/><g transform="translate(2379 111) scale(0.95)"><path d="M0 9.500h7l4.500-7v23l-4.500-7h-7z" fill="#111"/><path d="M16 8q4 6 0 12M20.500 2.500q7.500 11.500 0 23" stroke="#111" stroke-width="1.7" fill="none"/></g><path d="M2635.0 121.0l6.5-6.5 6.5 6.5M2635.0 130.0l6.5 6.5 6.5-6.5" stroke="#fff" stroke-width="2.6" fill="none" stroke-linecap="round" stroke-linejoin="round"/><path d="M1752 173h8l2-4 3 8 3-8 3 8 3-8 2 4h9" stroke="#555" stroke-width="1.2" fill="none"/><path d="M1775 168l-9 22" stroke="#000" stroke-width="3.2"/><ellipse cx="1762" cy="188" rx="4" ry="3.5" fill="none" stroke="#3942c8" stroke-width="1.8"/><ellipse cx="1772" cy="191" rx="3.2" ry="4.5" fill="none" stroke="#3942c8" stroke-width="1.8"/><path d="M1808 169h13l5 5v14h-18z" fill="#d2d2d2" stroke="#333" stroke-width="1.5"/><path d="M1824 176h14l6 6v11h-20z" fill="#fff" stroke="#2f3bd0" stroke-width="2"/><path d="M1828 186h3l1-3 2 6 2-6 2 6 1-3h3" stroke="#555" stroke-width="1.1" fill="none"/><path d="M1810 180h3l1-3 2 6 2-6 2 6" stroke="#777" stroke-width="1.1" fill="none"/><rect x="1864" y="170" width="27" height="21" rx="2" fill="#bcb8a6" stroke="#a7a393" stroke-width="1.5"/><rect x="1872" y="166" width="11" height="6" rx="2" fill="#c9c6b8" stroke="#a7a393"/><path d="M1876 178h15l5 5v14h-20z" fill="#b5b5c5" stroke="#9a9ab0" stroke-width="1.6"/><path d="M1879 190h3l1-3 2 6 2-6 2 6 1-3h3" stroke="#80808f" stroke-width="1.1" fill="none"/><path d="M1913 182h11M1945 182h9" stroke="#3540d2" stroke-width="1.8"/><path d="M1924 167v28M1944.500 167v28" stroke="#000" stroke-width="2.2"/><path d="M1926 186v-14q1.500-4 3 0v18q1.500 4 3 0v-18q1.500-4 3 0v18q1.500 4 3 0v-18q1.500-4 3 0v14" stroke="#3540d2" stroke-width="1.7" fill="none"/><path d="M1968 186v-12q1.500-4 3 0v14q1.500 4 3 0v-16q1.500-4 3 0v8M1997.500 190v-16q1.500-4 3 0v14q1.500 4 3 0v-14q1.500-4 3 0v12" stroke="#3540d2" stroke-width="1.7" fill="none"/><path d="M1980 182h14" stroke="#3540d2" stroke-width="1.8"/><path d="M1980 167v28M1994.500 167v28" stroke="#000" stroke-width="2.2"/><path d="M2060 178q12-5 19 3t-6 9" stroke="#7c7c7c" stroke-width="2" fill="none"/><path d="M2055 176l9-1-2 8z" fill="#7c7c7c"/><path d="M2132 178q-12-5-19 3t6 9" stroke="#7c7c7c" stroke-width="2" fill="none"/><path d="M2137 176l-9-1 2 8z" fill="#7c7c7c"/><circle cx="2205" cy="182" r="12.5" fill="#fff" stroke="#111" stroke-width="2.6"/><path d="M2205 169v-5M2200 163h10" stroke="#111" stroke-width="2.4"/><path d="M2200 176l5 7 6-4" stroke="#2f3bd0" stroke-width="2.4" fill="none"/><path d="M2196 196q9 5 19-1" stroke="#888" stroke-width="2" fill="none" opacity=".6"/><circle cx="2293" cy="176" r="9" fill="#fff" stroke="#333" stroke-width="1.5"/><path d="M2286.25 182.75l-13 11" stroke="#222" stroke-width="4.2"/><path d="M2287 176h12M2293 170v12" stroke="#2832b4" stroke-width="3"/><circle cx="2347" cy="176" r="9" fill="#fff" stroke="#333" stroke-width="1.5"/><path d="M2340.25 182.75l-13 11" stroke="#222" stroke-width="4.2"/><path d="M2341 176h12" stroke="#2832b4" stroke-width="3"/><circle cx="2397" cy="173" r="9" fill="#fff" stroke="#333" stroke-width="1.5"/><path d="M2390.25 179.75l-13 11" stroke="#222" stroke-width="4.2"/><path d="M2389 196h26M2397 191v10M2407 191v10" stroke="#2832b4" stroke-width="1.6"/><path d="M2397 196l5-4v8zM2407 196l-5-4v8z" fill="#2832b4"/><circle cx="2451" cy="173" r="9" fill="#fff" stroke="#333" stroke-width="1.5"/><path d="M2444.25 179.75l-13 11" stroke="#222" stroke-width="4.2"/><path d="M2444 196h24M2444 190v12M2468 190v12" stroke="#2832b4" stroke-width="2"/><g transform="translate(127 221) scale(0.95)"><path d="M0.500 39.500L6 34" stroke="#000" stroke-width="2"/><path d="M5 35L24 16" stroke="#000" stroke-width="5.4"/><path d="M8.500 29.500L22 16" stroke="#fff" stroke-width="1.3" stroke-dasharray="1.6 1.6"/><circle cx="29.500" cy="10.500" r="9.300" fill="#e2e2e2" stroke="#000" stroke-width="2.2"/><path d="M30 2.500a8 8 0 0 1 6.500 12.500q-3 4-8 3.300z" fill="#c2c2c2"/><path d="M23.500 5l13 11" stroke="#111" stroke-width="1.6" stroke-dasharray="2 1.2"/><path d="M22 17q4 4 10 2.500" stroke="#000" stroke-width="3" fill="none"/></g><defs><linearGradient id="tg346_247" x1="0" x2="1"><stop offset="0" stop-color="#fff"/><stop offset=".3" stop-color="#d4d5e8"/><stop offset=".6" stop-color="#c3c4dc"/><stop offset="1" stop-color="#f4f4fa"/></linearGradient></defs><path d="M339.5 231.5h14l3.500 4v12.500l-10.500 10-10.500-10v-12.500z" fill="url(#tg346_247)" stroke="#111" stroke-width="1.7" stroke-linejoin="round"/><path d="M343.0 237h7M343.0 241h7M343.0 244.5h7" stroke="#e6e7f4" stroke-width="1.4"/><g transform="translate(445 224) scale(1.0)"><path d="M0 9.500h7l4.500-7v23l-4.500-7h-7z" fill="#111"/><path d="M16 8q4 6 0 12M20.500 2.500q7.500 11.500 0 23" stroke="#111" stroke-width="1.7" fill="none"/></g><defs><linearGradient id="tg494_247" x1="0" x2="1"><stop offset="0" stop-color="#fff"/><stop offset=".3" stop-color="#d4d5e8"/><stop offset=".6" stop-color="#c3c4dc"/><stop offset="1" stop-color="#f4f4fa"/></linearGradient></defs><path d="M487.5 231.5h14l3.500 4v12.500l-10.500 10-10.500-10v-12.500z" fill="url(#tg494_247)" stroke="#111" stroke-width="1.7" stroke-linejoin="round"/><path d="M491.0 237h7M491.0 241h7M491.0 244.5h7" stroke="#e6e7f4" stroke-width="1.4"/><g fill="#7fd285"><path id="pas" d="M790.500 252.500a16 16 0 0 1-2-27.500l2.500-4.500 5 9.500-7.500 1.500 1.500 1.500a9.500 9.500 0 0 0 4.500 15.500z"/><use href="#pas" transform="rotate(180 795 237)"/></g><defs><linearGradient id="tg892_247" x1="0" x2="1"><stop offset="0" stop-color="#fff"/><stop offset=".3" stop-color="#d4d5e8"/><stop offset=".6" stop-color="#c3c4dc"/><stop offset="1" stop-color="#f4f4fa"/></linearGradient></defs><path d="M885.5 231.5h14l3.500 4v12.500l-10.500 10-10.500-10v-12.500z" fill="url(#tg892_247)" stroke="#111" stroke-width="1.7" stroke-linejoin="round"/><path d="M889.0 237h7M889.0 241h7M889.0 244.5h7" stroke="#e6e7f4" stroke-width="1.4"/><path d="M525.500 293v26M633.500 293v26" stroke="#8e8e98" stroke-width="1.5"/><path d="M537 306h88" stroke="#d3d3d3" stroke-width="3.5"/><path d="M526 306l11-11v22z" fill="#c4c4cc" stroke="#8e8e98" stroke-width="1.3"/><path d="M633 306l-11-11v22z" fill="#c4c4cc" stroke="#8e8e98" stroke-width="1.3"/><path d="M116 342l11 11M127 342l-11 11" stroke="#111" stroke-width="3"/><path d="M266 342h23l-11.500 11z" fill="#000"/><defs><linearGradient id="tg201_505" x1="0" x2="1"><stop offset="0" stop-color="#fff"/><stop offset=".3" stop-color="#d4d5e8"/><stop offset=".6" stop-color="#c3c4dc"/><stop offset="1" stop-color="#f4f4fa"/></linearGradient></defs><path d="M194.5 489.5h14l3.500 4v12.500l-10.500 10-10.500-10v-12.500z" fill="url(#tg201_505)" stroke="#111" stroke-width="1.7" stroke-linejoin="round"/><path d="M198.0 495h7M198.0 499h7M198.0 502.5h7" stroke="#e6e7f4" stroke-width="1.4"/><defs><linearGradient id="tg201_566" x1="0" x2="1"><stop offset="0" stop-color="#fff"/><stop offset=".3" stop-color="#d4d5e8"/><stop offset=".6" stop-color="#c3c4dc"/><stop offset="1" stop-color="#f4f4fa"/></linearGradient></defs><path d="M194.5 550.5h14l3.500 4v12.500l-10.500 10-10.500-10v-12.500z" fill="url(#tg201_566)" stroke="#111" stroke-width="1.7" stroke-linejoin="round"/><path d="M198.0 556h7M198.0 560h7M198.0 563.5h7" stroke="#e6e7f4" stroke-width="1.4"/><path d="M194 1459h23l-11.500-11z" fill="#9b9bad"/><path d="M249 1614l7.500 7.500 7.500-7.500" stroke="#fff" stroke-width="3" fill="none" stroke-linecap="round" stroke-linejoin="round"/><path d="M437.0 1614.5l6.5-6.5 6.5 6.5M437.0 1623.5l6.5 6.5 6.5-6.5" stroke="#fff" stroke-width="2.6" fill="none" stroke-linecap="round" stroke-linejoin="round"/><path d="M765 1615h12l-6 6.500z" fill="#000"/><path d="M1089 1615h12l-6 6.500z" fill="#000"/><path d="M1427 1615h12l-6 6.500z" fill="#000"/>
</svg>
<div id="hl"></div>
</div>
</body></html>
